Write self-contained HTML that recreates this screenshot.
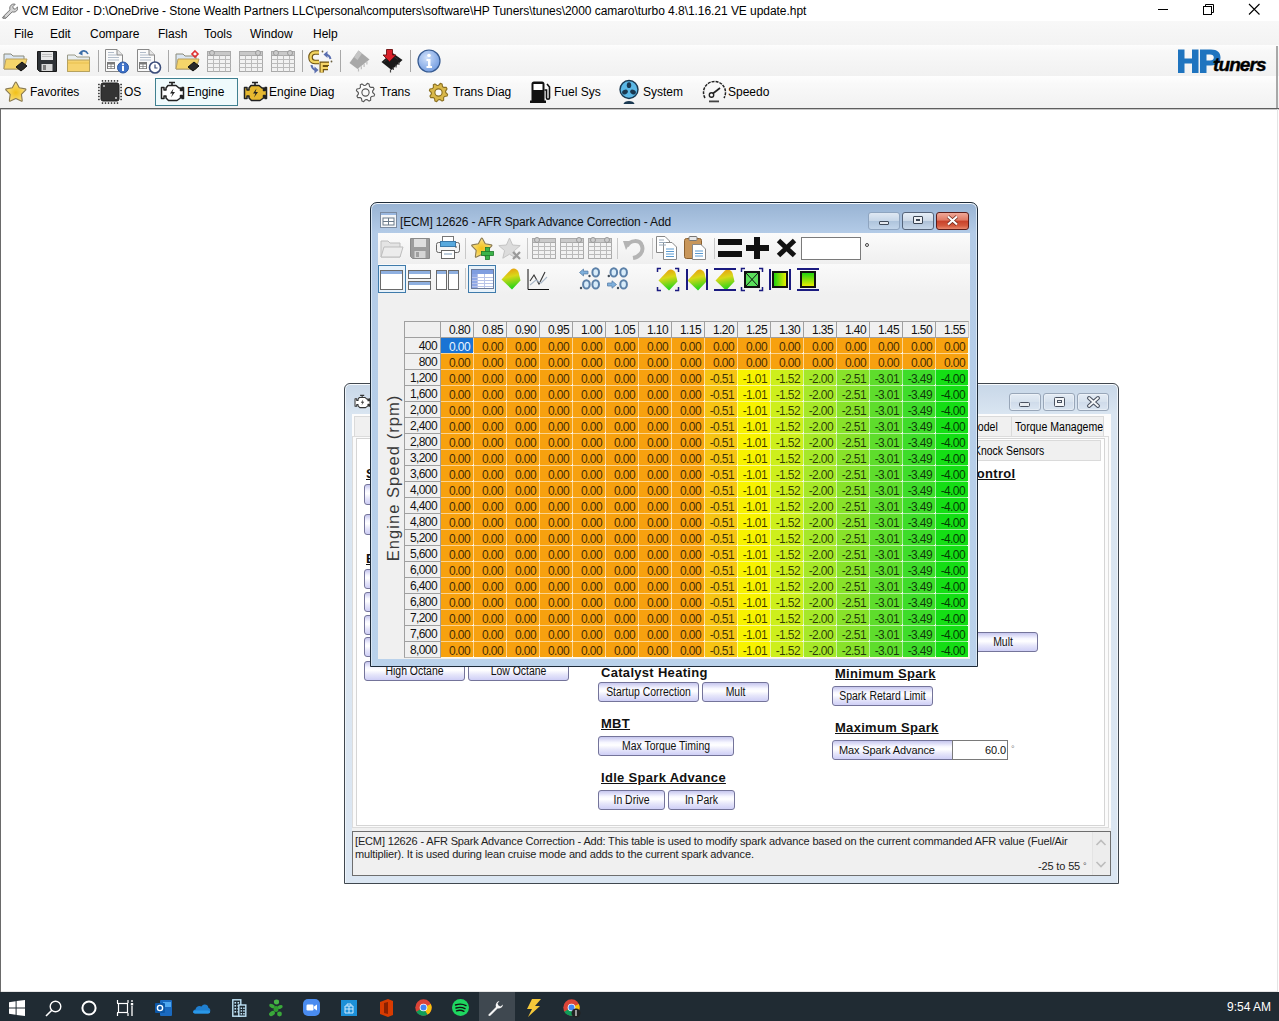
<!DOCTYPE html>
<html><head><meta charset="utf-8"><style>*{margin:0;padding:0;box-sizing:border-box}
html,body{width:1279px;height:1021px;overflow:hidden;background:#fff;font-family:"Liberation Sans",sans-serif;font-size:12px;color:#000;position:relative}
.abs{position:absolute}
.t{position:absolute;white-space:nowrap}
.c{font-size:12px;line-height:19px;text-align:right;padding-right:4px;color:#2a1a00;white-space:nowrap;letter-spacing:-0.6px}
.cell{width:32px;height:15px;font-size:12px;line-height:18px;text-align:right;padding-right:3px;color:rgba(0,0,0,0.76);white-space:nowrap;letter-spacing:-0.6px}
.h{background:#f0f0f0;border:1px solid #a0a0a0;color:#111}
</style></head><body>
<div class="abs" style="left:0;top:0;width:1279px;height:21px;background:#fff"></div>
<svg class="abs" style="left:1px;top:2px" width="17" height="17" viewBox="0 0 17 17">
<path d="M2.2 14.6 L9 7.8 C8.2 5.6 9.2 3 11.6 2.2 C12.6 1.9 13.4 2 14.2 2.3 L11.8 4.7 L12.4 6.6 L14.3 7.2 L16.6 4.8 C16.9 5.6 16.9 6.6 16.5 7.5 C15.6 9.6 13.3 10.6 11.2 9.9 L4.4 16.7 C3.8 17.3 2.8 17.2 2.2 16.6 L1.8 16.2 C1.2 15.8 1.6 15.2 2.2 14.6Z" fill="#d4d4d4" stroke="#6a6a6a" stroke-width="0.9"/>
<ellipse cx="3.2" cy="15.4" rx="1" ry="0.8" fill="none" stroke="#6a6a6a" stroke-width="0.7"/></svg>
<div class="t" style="left:22px;top:4px;font-size:12px;line-height:15px;color:#000;letter-spacing:-0.05px">VCM Editor - D:\OneDrive - Stone Wealth Partners LLC\personal\computers\software\HP Tuners\tunes\2000 camaro\turbo 4.8\1.16.21 VE update.hpt</div>
<div class="abs" style="left:1158px;top:9px;width:10px;height:1px;background:#000"></div>
<svg class="abs" style="left:1202px;top:3px" width="13" height="13" viewBox="0 0 13 13"><rect x="1.5" y="3.5" width="8" height="8" fill="none" stroke="#000" stroke-width="1"/><path d="M3.5 3.5 V1.5 H11.5 V9.5 H9.5" fill="none" stroke="#000" stroke-width="1"/></svg>
<svg class="abs" style="left:1248px;top:3px" width="13" height="13" viewBox="0 0 13 13"><path d="M1 1 L11.5 11.5 M11.5 1 L1 11.5" stroke="#000" stroke-width="1.1"/></svg>
<div class="abs" style="left:0;top:21px;width:1279px;height:24px;background:linear-gradient(#f8f8f8,#f3f3f3)"></div>
<div class="t" style="left:14px;top:27px;font-size:12px;line-height:15px">File</div>
<div class="t" style="left:50px;top:27px;font-size:12px;line-height:15px">Edit</div>
<div class="t" style="left:90px;top:27px;font-size:12px;line-height:15px">Compare</div>
<div class="t" style="left:158px;top:27px;font-size:12px;line-height:15px">Flash</div>
<div class="t" style="left:204px;top:27px;font-size:12px;line-height:15px">Tools</div>
<div class="t" style="left:250px;top:27px;font-size:12px;line-height:15px">Window</div>
<div class="t" style="left:313px;top:27px;font-size:12px;line-height:15px">Help</div>
<div class="abs" style="left:0;top:45px;width:1279px;height:31px;background:linear-gradient(#fdfdfd,#f8f8f8 20%,#f1f1f1)"></div>
<div class="abs" style="left:0;top:76px;width:1279px;height:32px;background:linear-gradient(#fefefe,#f9f9f9 25%,#f1f1f1)"></div>
<div class="abs" style="left:1276px;top:46px;width:2px;height:62px;background:#a8a8a8"></div>
<div class="abs" style="left:0;top:108px;width:1279px;height:1px;background:#5e5e5e"></div><div class="abs" style="left:0;top:109px;width:1279px;height:1px;background:#c8c8c8"></div>
<div class="abs" style="left:0;top:992px;width:1279px;height:29px;background:#202b33"></div>
<svg class="abs" style="left:3px;top:51px;overflow:visible" width="24" height="21" viewBox="0 0 24 21"><path d="M1 3 H8 L10 5 H21 V18 H1Z" fill="#dbe6f2" stroke="#8a8a7a" stroke-width="1"/>
<path d="M1 18 L3 8 H24 L21 18Z" fill="#f4d46a" stroke="#b9a060" stroke-width="1"/>
<path d="M13 16 L19 11 L24 15 L18 20Z" fill="#2a2a2a" stroke="#111" stroke-width="1"/></svg>
<svg class="abs" style="left:37px;top:51px;overflow:visible" width="20" height="21" viewBox="0 0 20 21"><path d="M0.5 0.5 H19.5 V20.5 H2.5 L0.5 18.5Z" fill="#2e3236" stroke="#1a1a1a"/>
<rect x="4" y="1" width="12" height="8" fill="#e8e8e8"/>
<rect x="5" y="3" width="10" height="1" fill="#c0c0c0"/><rect x="5" y="5" width="10" height="1" fill="#c0c0c0"/>
<rect x="4.5" y="13" width="11" height="7" fill="#d8d8d8"/><rect x="6" y="14" width="3" height="5" fill="#7a7a7a"/></svg>
<svg class="abs" style="left:67px;top:49px;overflow:visible" width="23" height="23" viewBox="0 0 23 23"><path d="M0.5 6 H8 L10 8 H22.5 V22.5 H0.5Z" fill="#e9eef0" stroke="#9a9a88"/>
<path d="M0.5 11 H22.5 V22.5 H0.5Z" fill="#f6d36e" stroke="#b7a25e"/>
<path d="M1 14 H22" stroke="#e8bf4c"/>
<path d="M13 4 C15 1 19 1 21 5" fill="none" stroke="#3d6fa8" stroke-width="1.6"/>
<path d="M11.5 4.5 L15.5 1.5 L15.5 6.5Z" fill="#3d6fa8"/></svg>
<div class="abs" style="left:98px;top:50px;width:1px;height:22px;background:#a8a8a8"></div>
<svg class="abs" style="left:105px;top:49px;overflow:visible" width="24" height="24" viewBox="0 0 24 24"><path d="M0.5 0.5 H12 L17.5 6 V22.5 H0.5Z" fill="#fafafa" stroke="#888"/>
<path d="M12 0.5 V6 H17.5" fill="#e6e6e6" stroke="#888"/>
<path d="M3 3.5 H9 M3 6 H12 M3 8.5 H14 M3 11 H14" stroke="#a8b4c4" stroke-width="0.9"/>
<rect x="2" y="13" width="8" height="7" fill="#7a7a7a"/><rect x="3" y="15.5" width="2.6" height="1.6" fill="#fff"/><rect x="6.4" y="15.5" width="2.6" height="1.6" fill="#fff"/><rect x="3" y="17.8" width="2.6" height="1.4" fill="#fff"/><rect x="6.4" y="17.8" width="2.6" height="1.4" fill="#fff"/><circle cx="18" cy="18.5" r="5.5" fill="#3f72c8" stroke="#2d58a0"/><rect x="17" y="17" width="2" height="5" fill="#fff"/><circle cx="18" cy="15.3" r="1.1" fill="#fff"/></svg>
<svg class="abs" style="left:137px;top:49px;overflow:visible" width="24" height="24" viewBox="0 0 24 24"><path d="M0.5 0.5 H12 L17.5 6 V22.5 H0.5Z" fill="#fafafa" stroke="#888"/>
<path d="M12 0.5 V6 H17.5" fill="#e6e6e6" stroke="#888"/>
<path d="M3 3.5 H9 M3 6 H12 M3 8.5 H14 M3 11 H14" stroke="#a8b4c4" stroke-width="0.9"/>
<rect x="2" y="13" width="8" height="7" fill="#7a7a7a"/><rect x="3" y="15.5" width="2.6" height="1.6" fill="#fff"/><rect x="6.4" y="15.5" width="2.6" height="1.6" fill="#fff"/><rect x="3" y="17.8" width="2.6" height="1.4" fill="#fff"/><rect x="6.4" y="17.8" width="2.6" height="1.4" fill="#fff"/><circle cx="18" cy="18.5" r="5.5" fill="#fff" stroke="#3a4c7a" stroke-width="1.6"/><path d="M18 15.5 V19 H20.5" stroke="#3a4c7a" stroke-width="1.2" fill="none"/></svg>
<div class="abs" style="left:168px;top:50px;width:1px;height:22px;background:#a8a8a8"></div>
<svg class="abs" style="left:175px;top:51px;overflow:visible" width="24" height="21" viewBox="0 0 24 21"><path d="M1 3 H8 L10 5 H21 V18 H1Z" fill="#dbe6f2" stroke="#8a8a7a" stroke-width="1"/>
<path d="M1 18 L3 8 H24 L21 18Z" fill="#f4d46a" stroke="#b9a060" stroke-width="1"/>
<path d="M13 16 L19 11 L24 15 L18 20Z" fill="#2a2a2a" stroke="#111" stroke-width="1"/><path d="M20 0 L23 3 L20 6 L17 3Z" fill="none" stroke="#e03030" stroke-width="1.6"/></svg>
<svg class="abs" style="left:207px;top:50px;overflow:visible" width="24" height="23" viewBox="0 0 24 23"><rect x="0.5" y="1.5" width="23" height="20" fill="#f2f2f2" stroke="#aaa"/><rect x="0.5" y="1.5" width="23" height="4" fill="#c9c9c9" stroke="#aaa"/><path d="M6.5 5.5 V21.5" stroke="#bbb"/><path d="M12.5 5.5 V21.5" stroke="#bbb"/><path d="M18.5 5.5 V21.5" stroke="#bbb"/><path d="M0.5 9.5 H23.5" stroke="#bbb"/><path d="M0.5 13.5 H23.5" stroke="#bbb"/><path d="M0.5 17.5 H23.5" stroke="#bbb"/><circle cx="5" cy="3" r="2.5" fill="#ccc" stroke="#999"/></svg>
<svg class="abs" style="left:239px;top:50px;overflow:visible" width="24" height="23" viewBox="0 0 24 23"><rect x="0.5" y="1.5" width="23" height="20" fill="#f2f2f2" stroke="#aaa"/><rect x="0.5" y="1.5" width="23" height="4" fill="#c9c9c9" stroke="#aaa"/><path d="M6.5 5.5 V21.5" stroke="#bbb"/><path d="M12.5 5.5 V21.5" stroke="#bbb"/><path d="M18.5 5.5 V21.5" stroke="#bbb"/><path d="M0.5 9.5 H23.5" stroke="#bbb"/><path d="M0.5 13.5 H23.5" stroke="#bbb"/><path d="M0.5 17.5 H23.5" stroke="#bbb"/><circle cx="19" cy="3" r="2.5" fill="#ccc" stroke="#999"/></svg>
<svg class="abs" style="left:271px;top:50px;overflow:visible" width="24" height="23" viewBox="0 0 24 23"><rect x="0.5" y="1.5" width="23" height="20" fill="#f2f2f2" stroke="#aaa"/><rect x="0.5" y="1.5" width="23" height="4" fill="#c9c9c9" stroke="#aaa"/><path d="M6.5 5.5 V21.5" stroke="#bbb"/><path d="M12.5 5.5 V21.5" stroke="#bbb"/><path d="M18.5 5.5 V21.5" stroke="#bbb"/><path d="M0.5 9.5 H23.5" stroke="#bbb"/><path d="M0.5 13.5 H23.5" stroke="#bbb"/><path d="M0.5 17.5 H23.5" stroke="#bbb"/><circle cx="5" cy="3" r="2.5" fill="#ccc" stroke="#999"/><circle cx="19" cy="3" r="2.5" fill="#ccc" stroke="#999"/></svg>
<div class="abs" style="left:302px;top:50px;width:1px;height:22px;background:#a8a8a8"></div>
<svg class="abs" style="left:305px;top:46px;overflow:visible" width="30" height="30" viewBox="0 0 30 30"><path d="M14 6.5 H10 C6.8 6.5 5.5 9 5.5 11.3 C5.5 13.6 6.8 16 10 16 H14" fill="none" stroke="#6e5210" stroke-width="4.6"/>
<path d="M14 6.5 H10 C6.8 6.5 5.5 9 5.5 11.3 C5.5 13.6 6.8 16 10 16 H14" fill="none" stroke="#f1d462" stroke-width="2.4"/>
<path d="M16.7 26.5 V17.8 H24 M16.7 22 H23" fill="none" stroke="#6e5210" stroke-width="4.4"/>
<path d="M16.7 26.5 V17.8 H24 M16.7 22 H23" fill="none" stroke="#f6d468" stroke-width="2.2"/>
<path d="M20.5 8.5 Q24.5 8.8 25.5 13" fill="none" stroke="#5a6fb0" stroke-width="2"/><path d="M18.5 8.5 L22.5 5 L22.5 12Z" fill="#5a6fb0"/>
<path d="M6.5 19 Q7 23 10.5 24" fill="none" stroke="#5a6fb0" stroke-width="2"/><path d="M13.5 24 L9.5 20.5 L9.5 27.5Z" fill="#5a6fb0"/>
<circle cx="17.5" cy="5.5" r="0.9" fill="#6a6040"/><circle cx="26.5" cy="15.5" r="0.9" fill="#6a6040"/></svg>
<div class="abs" style="left:340px;top:50px;width:1px;height:22px;background:#a8a8a8"></div>
<svg class="abs" style="left:348px;top:46px;overflow:visible" width="24" height="28" viewBox="0 0 24 28"><path d="M1.5 17 L10.5 4.5 L21.5 13.5 L9.5 23Z" fill="#a8a8a8"/><path d="M6 11 L10.5 4.5 L14 7.5 L9.5 14Z" fill="#c4c4c4"/><path d="M10.5 22.5 V25.5" stroke="#bcbcbc" stroke-width="1.2"/><path d="M13.3 20.2 V23.2" stroke="#bcbcbc" stroke-width="1.2"/><path d="M16.1 17.9 V20.9" stroke="#bcbcbc" stroke-width="1.2"/><path d="M18.9 15.600000000000001 V18.6" stroke="#bcbcbc" stroke-width="1.2"/></svg>
<svg class="abs" style="left:380px;top:46px;overflow:visible" width="24" height="28" viewBox="0 0 24 28"><path d="M1.5 16 L12 6.5 L22.5 14 L11.5 24Z" fill="#1a1a1a"/><path d="M4 16 L12 9 L18 13.5" fill="none" stroke="#3a3a3a" stroke-width="0.8"/><path d="M10.5 23.5 V26.5" stroke="#444" stroke-width="1.2"/><path d="M13.3 21.0 V24.0" stroke="#444" stroke-width="1.2"/><path d="M16.1 18.5 V21.5" stroke="#444" stroke-width="1.2"/><path d="M18.9 16.0 V19.0" stroke="#444" stroke-width="1.2"/><path d="M6.5 3.5 H12.5 V9 H16 L9.5 15.5 L3 9 H6.5Z" fill="#d8202a" stroke="#6a1010" stroke-width="0.9"/></svg>
<div class="abs" style="left:410px;top:50px;width:1px;height:22px;background:#a8a8a8"></div>
<svg class="abs" style="left:417px;top:49px;overflow:visible" width="24" height="24" viewBox="0 0 24 24"><defs><radialGradient id="ig" cx="0.4" cy="0.35" r="0.7"><stop offset="0" stop-color="#cfe0fa"/><stop offset="1" stop-color="#6f9ae0"/></radialGradient></defs>
<circle cx="12" cy="12" r="11" fill="url(#ig)" stroke="#35598f" stroke-width="1.2"/>
<circle cx="12" cy="6.5" r="1.8" fill="#fff"/><path d="M9.5 10 H13.5 V17 H15 V19 H9.5 V17 H11 V12 H9.5Z" fill="#fff"/></svg>
<svg class="abs" style="left:1178px;top:49px;overflow:visible" width="43" height="25" viewBox="0 0 43 25"><path d="M0 0.5 H6.5 V9.5 H14 V0.5 H20.5 V24 H14 V14.5 H6.5 V24 H0Z" fill="#1f74bf"/>
<path d="M22 0.5 H33 C39.5 0.5 42.5 3.5 42.5 8.5 C42.5 13.5 39 16.5 33 16.5 H28.5 V24 H22Z M28.5 5.5 V11.5 H32 C34.5 11.5 35.8 10.5 35.8 8.5 C35.8 6.5 34.5 5.5 32 5.5Z" fill="#1f74bf" fill-rule="evenodd"/></svg><div class="t" style="left:1213px;top:55px;font-family:'Liberation Sans';font-weight:bold;font-style:italic;font-size:19px;line-height:20px;color:#000;letter-spacing:-0.9px;-webkit-text-stroke:0.4px #000">tuners</div>
<svg class="abs" style="left:4px;top:80px;overflow:visible" width="24" height="24" viewBox="0 0 24 24"><defs><radialGradient id="sg" cx="0.5" cy="0.55" r="0.55"><stop offset="0" stop-color="#f2c018"/><stop offset="0.6" stop-color="#f6d45a"/><stop offset="1" stop-color="#f8e49a"/></radialGradient></defs>
<path d="M11.18 2.56 Q11.80 1.40 12.42 2.56 L15.27 7.83 L21.16 8.90 Q22.45 9.14 21.54 10.09 L17.41 14.42 L18.21 20.36 Q18.38 21.66 17.20 21.09 L11.80 18.50 L6.40 21.09 Q5.22 21.66 5.39 20.36 L6.19 14.42 L2.06 10.09 Q1.15 9.14 2.44 8.90 L8.33 7.83 Z" fill="url(#sg)" stroke="#8a7a50" stroke-width="1.1" stroke-linejoin="round"/></svg>
<div class="t" style="left:30px;top:85px;font-size:12px;line-height:15px">Favorites</div>
<svg class="abs" style="left:98px;top:80px;overflow:visible" width="24" height="24" viewBox="0 0 24 24"><rect x="3" y="3" width="18" height="18" rx="2" fill="#333" stroke="#222"/><rect x="3.8" y="0" width="1.4" height="1.8" fill="#444"/><rect x="3.8" y="22.2" width="1.4" height="1.8" fill="#444"/><rect x="0" y="3.8" width="1.8" height="1.4" fill="#444"/><rect x="22.2" y="3.8" width="1.8" height="1.4" fill="#444"/><rect x="6.8" y="0" width="1.4" height="1.8" fill="#444"/><rect x="6.8" y="22.2" width="1.4" height="1.8" fill="#444"/><rect x="0" y="6.8" width="1.8" height="1.4" fill="#444"/><rect x="22.2" y="6.8" width="1.8" height="1.4" fill="#444"/><rect x="9.8" y="0" width="1.4" height="1.8" fill="#444"/><rect x="9.8" y="22.2" width="1.4" height="1.8" fill="#444"/><rect x="0" y="9.8" width="1.8" height="1.4" fill="#444"/><rect x="22.2" y="9.8" width="1.8" height="1.4" fill="#444"/><rect x="12.8" y="0" width="1.4" height="1.8" fill="#444"/><rect x="12.8" y="22.2" width="1.4" height="1.8" fill="#444"/><rect x="0" y="12.8" width="1.8" height="1.4" fill="#444"/><rect x="22.2" y="12.8" width="1.8" height="1.4" fill="#444"/><rect x="15.8" y="0" width="1.4" height="1.8" fill="#444"/><rect x="15.8" y="22.2" width="1.4" height="1.8" fill="#444"/><rect x="0" y="15.8" width="1.8" height="1.4" fill="#444"/><rect x="22.2" y="15.8" width="1.8" height="1.4" fill="#444"/><rect x="18.8" y="0" width="1.4" height="1.8" fill="#444"/><rect x="18.8" y="22.2" width="1.4" height="1.8" fill="#444"/><rect x="0" y="18.8" width="1.8" height="1.4" fill="#444"/><rect x="22.2" y="18.8" width="1.8" height="1.4" fill="#444"/><circle cx="6" cy="6" r="0.9" fill="#ddd"/><circle cx="18" cy="18" r="0.9" fill="#ddd"/></svg>
<div class="t" style="left:124px;top:85px;font-size:12px;line-height:15px">OS</div>
<div class="abs" style="left:155px;top:78px;width:83px;height:28px;border:1px solid #3f8090;background:#effafc"></div>
<svg class="abs" style="left:160px;top:81px;overflow:visible" width="25" height="21" viewBox="0 0 25 21"><path d="M9 1.5 H15 M12 1.5 V4.5" stroke="#222" stroke-width="1.6"/>
<path d="M6 7 L8 4.5 H16 L19 7 H20.5 V9.5 H22 V6.5 H23.5 V17.5 H22 V14.5 H20.5 V17 L17 19.5 H8.5 L6 17 V15 H4 V17.5 H1.5 V6.5 H4 V9 H6Z" fill="#fff" stroke="#222" stroke-width="1.5" stroke-linejoin="round"/>
<path d="M13.5 7.5 L10 12.5 H12.5 L11 16.5 L15 11 H12.5Z" fill="#222"/></svg>
<div class="t" style="left:187px;top:85px;font-size:12px;line-height:15px">Engine</div>
<svg class="abs" style="left:243px;top:81px;overflow:visible" width="25" height="21" viewBox="0 0 25 21"><path d="M9 1.5 H15 M12 1.5 V4.5" stroke="#222" stroke-width="1.6"/>
<path d="M6 7 L8 4.5 H16 L19 7 H20.5 V9.5 H22 V6.5 H23.5 V17.5 H22 V14.5 H20.5 V17 L17 19.5 H8.5 L6 17 V15 H4 V17.5 H1.5 V6.5 H4 V9 H6Z" fill="#e6b830" stroke="#222" stroke-width="1.5" stroke-linejoin="round"/>
<path d="M13.5 7.5 L10 12.5 H12.5 L11 16.5 L15 11 H12.5Z" fill="#222"/></svg>
<div class="t" style="left:269px;top:85px;font-size:12px;line-height:15px">Engine Diag</div>
<svg class="abs" style="left:356px;top:83px;overflow:visible" width="19" height="19" viewBox="0 0 19 19"><path d="M16.70,9.50 L18.62,11.31 L18.09,13.06 L15.49,13.50 L14.59,14.59 L14.67,17.23 L13.06,18.09 L10.90,16.56 L9.50,16.70 L7.69,18.62 L5.94,18.09 L5.50,15.49 L4.41,14.59 L1.77,14.67 L0.91,13.06 L2.44,10.90 L2.30,9.50 L0.38,7.69 L0.91,5.94 L3.51,5.50 L4.41,4.41 L4.33,1.77 L5.94,0.91 L8.10,2.44 L9.50,2.30 L11.31,0.38 L13.06,0.91 L13.50,3.51 L14.59,4.41 L17.23,4.33 L18.09,5.94 L16.56,8.10Z" fill="#fafafa" stroke="#555" stroke-width="1.1" stroke-linejoin="round"/><circle cx="9.5" cy="9.5" r="3.6" fill="#fafafa" stroke="#555" stroke-width="1.1"/></svg>
<div class="t" style="left:380px;top:85px;font-size:12px;line-height:15px">Trans</div>
<svg class="abs" style="left:429px;top:83px;overflow:visible" width="19" height="19" viewBox="0 0 19 19"><path d="M16.70,9.50 L18.62,11.31 L18.09,13.06 L15.49,13.50 L14.59,14.59 L14.67,17.23 L13.06,18.09 L10.90,16.56 L9.50,16.70 L7.69,18.62 L5.94,18.09 L5.50,15.49 L4.41,14.59 L1.77,14.67 L0.91,13.06 L2.44,10.90 L2.30,9.50 L0.38,7.69 L0.91,5.94 L3.51,5.50 L4.41,4.41 L4.33,1.77 L5.94,0.91 L8.10,2.44 L9.50,2.30 L11.31,0.38 L13.06,0.91 L13.50,3.51 L14.59,4.41 L17.23,4.33 L18.09,5.94 L16.56,8.10Z" fill="#d9b84a" stroke="#8a6f20" stroke-width="1.1" stroke-linejoin="round"/><circle cx="9.5" cy="9.5" r="3.6" fill="#fafafa" stroke="#8a6f20" stroke-width="1.1"/></svg>
<div class="t" style="left:453px;top:85px;font-size:12px;line-height:15px">Trans Diag</div>
<svg class="abs" style="left:530px;top:81px;overflow:visible" width="21" height="22" viewBox="0 0 21 22"><path d="M1.5 3 C1.5 1.5 2.5 0.5 4 0.5 H12 C13.5 0.5 14.5 1.5 14.5 3 V19.5 H16 V22 H0 V19.5 H1.5Z" fill="#111"/>
<rect x="3.5" y="3" width="9" height="6" fill="#fff"/>
<path d="M14.5 9 H16.5 V17 C16.5 18.5 19.5 18.5 19.5 17 V6 L17 3" fill="none" stroke="#111" stroke-width="1.6"/></svg>
<div class="t" style="left:554px;top:85px;font-size:12px;line-height:15px">Fuel Sys</div>
<svg class="abs" style="left:619px;top:80px;overflow:visible" width="20" height="24" viewBox="0 0 20 24"><circle cx="10" cy="9.5" r="9" fill="#5cb8e6" stroke="#1a3850" stroke-width="1.4"/>
<ellipse cx="10" cy="5.2" rx="2.2" ry="3" fill="#1a3850"/><ellipse cx="6" cy="12" rx="3" ry="2.2" transform="rotate(-30 6 12)" fill="#1a3850"/><ellipse cx="14" cy="12" rx="3" ry="2.2" transform="rotate(30 14 12)" fill="#1a3850"/>
<circle cx="10" cy="9.5" r="1.4" fill="#5cb8e6"/>
<path d="M4.5 24 C5 20 15 20 15.5 24Z" fill="#1a3850"/></svg>
<div class="t" style="left:643px;top:85px;font-size:12px;line-height:15px">System</div>
<svg class="abs" style="left:702px;top:81px;overflow:visible" width="25" height="22" viewBox="0 0 25 22"><path d="M3 17 A11 11 0 1 1 22 17" fill="none" stroke="#222" stroke-width="1.5" stroke-dasharray="3 1"/>
<path d="M9 14 L18 7" stroke="#222" stroke-width="1.6"/><circle cx="9.5" cy="14" r="2.2" fill="#fff" stroke="#222" stroke-width="1.4"/>
<rect x="7" y="19.5" width="10" height="1.8" fill="#444"/></svg>
<div class="t" style="left:728px;top:85px;font-size:12px;line-height:15px">Speedo</div>
<div class="abs" style="left:344px;top:383px;width:775px;height:501px;border:1px solid #40474f;border-radius:6px 6px 0 0;background:linear-gradient(#c8d7e8,#d9e5f1 30px,#dbe6f2);box-shadow:inset 0 1px 0 #f8fbfe,inset 1px 0 0 #eef4fa,inset -1px 0 0 #eef4fa"></div>
<svg class="abs" style="left:354px;top:394px;overflow:visible" width="17" height="15" viewBox="0 0 25 21"><path d="M9 1.5 H15 M12 1.5 V4.5" stroke="#333" stroke-width="1.6"/>
<path d="M6 7 L8 4.5 H16 L19 7 H20.5 V9.5 H22 V6.5 H23.5 V17.5 H22 V14.5 H20.5 V17 L17 19.5 H8.5 L6 17 V15 H4 V17.5 H1.5 V6.5 H4 V9 H6Z" fill="#fff" stroke="#333" stroke-width="1.5" stroke-linejoin="round"/>
<path d="M13.5 7.5 L10 12.5 H12.5 L11 16.5 L15 11 H12.5Z" fill="#333"/></svg>
<div class="abs" style="left:1009px;top:393px;width:32px;height:18px;border:1px solid #98a6b8;border-radius:3px;background:linear-gradient(#e4ecf5,#d6e1ed 50%,#cfdbea 51%,#dae5f1);box-shadow:inset 0 0 0 1px rgba(255,255,255,0.35)"></div>
<div class="abs" style="left:1043px;top:393px;width:32px;height:18px;border:1px solid #98a6b8;border-radius:3px;background:linear-gradient(#e4ecf5,#d6e1ed 50%,#cfdbea 51%,#dae5f1);box-shadow:inset 0 0 0 1px rgba(255,255,255,0.35)"></div>
<div class="abs" style="left:1077px;top:393px;width:32px;height:18px;border:1px solid #98a6b8;border-radius:3px;background:linear-gradient(#e4ecf5,#d6e1ed 50%,#cfdbea 51%,#dae5f1);box-shadow:inset 0 0 0 1px rgba(255,255,255,0.35)"></div>
<div class="abs" style="left:1019px;top:402px;width:11px;height:5px;border:1.5px solid #4a5260;background:#e8ecf0;border-radius:1.5px"></div>
<div class="abs" style="left:1054px;top:397px;width:11px;height:10px;border:1.5px solid #4a5260;background:#f4f6f8;border-radius:1.5px"></div>
<div class="abs" style="left:1057px;top:400px;width:5px;height:3px;border:1px solid #4a5260;background:#e8ecf0"></div>
<svg class="abs" style="left:1087px;top:396px;overflow:visible" width="13" height="12" viewBox="0 0 13 12"><path d="M2 2 L11 10 M11 2 L2 10" stroke="#4a5260" stroke-width="4" stroke-linecap="round"/><path d="M2 2 L11 10 M11 2 L2 10" stroke="#f6f8fa" stroke-width="1.8" stroke-linecap="round"/></svg>
<div class="abs" style="left:352px;top:414px;width:759px;height:462px;background:#f0f0f0"></div>
<div class="abs" style="left:352px;top:414px;width:759px;height:414px;background:#fcfcfc"></div>
<div class="abs" style="left:354px;top:416px;width:750px;height:20px;background:#f0f0f0;border:1px solid #dadada;border-bottom:none"></div>
<div class="abs" style="left:1011px;top:416px;width:1px;height:20px;background:#dadada"></div>
<div class="t" style="left:969px;top:420px;font-size:12px;line-height:14px;transform:scaleX(0.88);transform-origin:left top">Model</div>
<div class="t" style="left:1015px;top:420px;width:100px;overflow:hidden;font-size:12px;line-height:14px;transform:scaleX(0.88);transform-origin:left top">Torque Manageme</div>
<div class="abs" style="left:1104px;top:416px;width:7px;height:20px;background:#fcfcfc"></div>
<div class="abs" style="left:352px;top:436px;width:757px;height:392px;border:1px solid #dcdcdc;background:#fbfbfb"></div>
<div class="abs" style="left:356px;top:438px;width:749px;height:388px;border:1px solid #d5d5d5;background:#fff"></div>
<div class="abs" style="left:520px;top:440px;width:581px;height:21px;background:#f0f0f0;border:1px solid #dadada"></div>
<div class="t" style="left:974px;top:444px;font-size:12px;line-height:14px;transform:scaleX(0.87);transform-origin:left top">Knock Sensors</div>
<div class="t" style="left:366px;top:467px;font-size:12px;line-height:14px;font-weight:bold;letter-spacing:0.3px;transform:scaleX(1.08);transform-origin:left top;text-decoration:underline;text-underline-offset:1px;color:#111">Spark Control</div>
<div class="abs" style="left:364px;top:484px;width:100px;height:21px;border:1px solid #74749a;border-radius:3px;background:linear-gradient(#c6c6ee 0%,#f6f6ff 30%,#ffffff 45%,#e6e6fa 70%,#cfcff6 100%);"></div><div class="t" style="left:364px;top:484px;width:100px;height:21px;line-height:22px;text-align:center;font-size:12px;color:#111;transform:scaleX(0.87)">Base</div>
<div class="abs" style="left:364px;top:514px;width:100px;height:21px;border:1px solid #74749a;border-radius:3px;background:linear-gradient(#c6c6ee 0%,#f6f6ff 30%,#ffffff 45%,#e6e6fa 70%,#cfcff6 100%);"></div><div class="t" style="left:364px;top:514px;width:100px;height:21px;line-height:22px;text-align:center;font-size:12px;color:#111;transform:scaleX(0.87)">Base</div>
<div class="t" style="left:366px;top:552px;font-size:12px;line-height:14px;font-weight:bold;letter-spacing:0.3px;transform:scaleX(1.08);transform-origin:left top;text-decoration:underline;text-underline-offset:1px;color:#111">Burst Knock</div>
<div class="abs" style="left:364px;top:569px;width:100px;height:20px;border:1px solid #74749a;border-radius:3px;background:linear-gradient(#c6c6ee 0%,#f6f6ff 30%,#ffffff 45%,#e6e6fa 70%,#cfcff6 100%);"></div><div class="t" style="left:364px;top:569px;width:100px;height:20px;line-height:21px;text-align:center;font-size:12px;color:#111;transform:scaleX(0.87)">Table</div>
<div class="abs" style="left:364px;top:592px;width:100px;height:20px;border:1px solid #74749a;border-radius:3px;background:linear-gradient(#c6c6ee 0%,#f6f6ff 30%,#ffffff 45%,#e6e6fa 70%,#cfcff6 100%);"></div><div class="t" style="left:364px;top:592px;width:100px;height:20px;line-height:21px;text-align:center;font-size:12px;color:#111;transform:scaleX(0.87)">Table</div>
<div class="abs" style="left:364px;top:615px;width:100px;height:20px;border:1px solid #74749a;border-radius:3px;background:linear-gradient(#c6c6ee 0%,#f6f6ff 30%,#ffffff 45%,#e6e6fa 70%,#cfcff6 100%);"></div><div class="t" style="left:364px;top:615px;width:100px;height:20px;line-height:21px;text-align:center;font-size:12px;color:#111;transform:scaleX(0.87)">Table</div>
<div class="abs" style="left:364px;top:637px;width:100px;height:20px;border:1px solid #74749a;border-radius:3px;background:linear-gradient(#c6c6ee 0%,#f6f6ff 30%,#ffffff 45%,#e6e6fa 70%,#cfcff6 100%);"></div><div class="t" style="left:364px;top:637px;width:100px;height:20px;line-height:21px;text-align:center;font-size:12px;color:#111;transform:scaleX(0.87)">Table</div>
<div class="abs" style="left:364px;top:661px;width:101px;height:20px;border:1px solid #74749a;border-radius:3px;background:linear-gradient(#c6c6ee 0%,#f6f6ff 30%,#ffffff 45%,#e6e6fa 70%,#cfcff6 100%);"></div><div class="t" style="left:364px;top:661px;width:101px;height:20px;line-height:21px;text-align:center;font-size:12px;color:#111;transform:scaleX(0.87)">High Octane</div>
<div class="abs" style="left:468px;top:661px;width:101px;height:20px;border:1px solid #74749a;border-radius:3px;background:linear-gradient(#c6c6ee 0%,#f6f6ff 30%,#ffffff 45%,#e6e6fa 70%,#cfcff6 100%);"></div><div class="t" style="left:468px;top:661px;width:101px;height:20px;line-height:21px;text-align:center;font-size:12px;color:#111;transform:scaleX(0.87)">Low Octane</div>
<div class="t" style="left:601px;top:666px;font-size:12px;line-height:14px;font-weight:bold;letter-spacing:0.3px;transform:scaleX(1.08);transform-origin:left top;color:#111">Catalyst Heating</div>
<div class="abs" style="left:598px;top:682px;width:101px;height:20px;border:1px solid #74749a;border-radius:3px;background:linear-gradient(#c6c6ee 0%,#f6f6ff 30%,#ffffff 45%,#e6e6fa 70%,#cfcff6 100%);"></div><div class="t" style="left:598px;top:682px;width:101px;height:20px;line-height:21px;text-align:center;font-size:12px;color:#111;transform:scaleX(0.87)">Startup Correction</div>
<div class="abs" style="left:702px;top:682px;width:67px;height:20px;border:1px solid #74749a;border-radius:3px;background:linear-gradient(#c6c6ee 0%,#f6f6ff 30%,#ffffff 45%,#e6e6fa 70%,#cfcff6 100%);"></div><div class="t" style="left:702px;top:682px;width:67px;height:20px;line-height:21px;text-align:center;font-size:12px;color:#111;transform:scaleX(0.87)">Mult</div>
<div class="t" style="left:601px;top:717px;font-size:12px;line-height:14px;font-weight:bold;letter-spacing:0.3px;transform:scaleX(1.08);transform-origin:left top;text-decoration:underline;text-underline-offset:1px;color:#111">MBT</div>
<div class="abs" style="left:598px;top:736px;width:136px;height:20px;border:1px solid #74749a;border-radius:3px;background:linear-gradient(#c6c6ee 0%,#f6f6ff 30%,#ffffff 45%,#e6e6fa 70%,#cfcff6 100%);"></div><div class="t" style="left:598px;top:736px;width:136px;height:20px;line-height:21px;text-align:center;font-size:12px;color:#111;transform:scaleX(0.87)">Max Torque Timing</div>
<div class="t" style="left:601px;top:771px;font-size:12px;line-height:14px;font-weight:bold;letter-spacing:0.3px;transform:scaleX(1.08);transform-origin:left top;text-decoration:underline;text-underline-offset:1px;color:#111">Idle Spark Advance</div>
<div class="abs" style="left:598px;top:790px;width:67px;height:20px;border:1px solid #74749a;border-radius:3px;background:linear-gradient(#c6c6ee 0%,#f6f6ff 30%,#ffffff 45%,#e6e6fa 70%,#cfcff6 100%);"></div><div class="t" style="left:598px;top:790px;width:67px;height:20px;line-height:21px;text-align:center;font-size:12px;color:#111;transform:scaleX(0.87)">In Drive</div>
<div class="abs" style="left:668px;top:790px;width:67px;height:20px;border:1px solid #74749a;border-radius:3px;background:linear-gradient(#c6c6ee 0%,#f6f6ff 30%,#ffffff 45%,#e6e6fa 70%,#cfcff6 100%);"></div><div class="t" style="left:668px;top:790px;width:67px;height:20px;line-height:21px;text-align:center;font-size:12px;color:#111;transform:scaleX(0.87)">In Park</div>
<div class="t" style="left:922px;top:467px;font-size:12px;line-height:14px;font-weight:bold;letter-spacing:0.3px;transform:scaleX(1.08);transform-origin:left top;text-decoration:underline;text-underline-offset:1px;color:#111">Knock Control</div>
<div class="abs" style="left:968px;top:632px;width:70px;height:20px;border:1px solid #74749a;border-radius:3px;background:linear-gradient(#c6c6ee 0%,#f6f6ff 30%,#ffffff 45%,#e6e6fa 70%,#cfcff6 100%);"></div><div class="t" style="left:968px;top:632px;width:70px;height:20px;line-height:21px;text-align:center;font-size:12px;color:#111;transform:scaleX(0.87)">Mult</div>
<div class="t" style="left:835px;top:667px;font-size:12px;line-height:14px;font-weight:bold;letter-spacing:0.3px;transform:scaleX(1.08);transform-origin:left top;text-decoration:underline;text-underline-offset:1px;color:#111">Minimum Spark</div>
<div class="abs" style="left:832px;top:686px;width:101px;height:20px;border:1px solid #74749a;border-radius:3px;background:linear-gradient(#c6c6ee 0%,#f6f6ff 30%,#ffffff 45%,#e6e6fa 70%,#cfcff6 100%);"></div><div class="t" style="left:832px;top:686px;width:101px;height:20px;line-height:21px;text-align:center;font-size:12px;color:#111;transform:scaleX(0.87)">Spark Retard Limit</div>
<div class="t" style="left:835px;top:721px;font-size:12px;line-height:14px;font-weight:bold;letter-spacing:0.3px;transform:scaleX(1.08);transform-origin:left top;text-decoration:underline;text-underline-offset:1px;color:#111">Maximum Spark</div>
<div class="abs" style="left:832px;top:740px;width:121px;height:20px;border:1px solid #74749a;border-radius:3px 0 0 3px;background:linear-gradient(#c6c6ee 0%,#f6f6ff 30%,#ffffff 45%,#e6e6fa 70%,#cfcff6 100%)"></div>
<div class="t" style="left:839px;top:743px;font-size:11px;line-height:14px;letter-spacing:-0.12px;color:#111">Max Spark Advance</div>
<div class="abs" style="left:952px;top:740px;width:56px;height:20px;border:1px solid #7a7a7a;background:#fff"></div>
<div class="t" style="left:952px;top:743px;width:54px;text-align:right;font-size:11px;line-height:14px;letter-spacing:-0.1px;color:#111">60.0</div>
<div class="t" style="left:1011px;top:744px;font-size:9px;line-height:10px;color:#888">°</div>
<div class="abs" style="left:352px;top:831px;width:759px;height:45px;border:1px solid #6e6e6e;background:#f0f0f0"></div>
<div class="abs" style="left:1092px;top:832px;width:18px;height:43px;background:#ededed;border-left:1px solid #e4e4e4"></div>
<svg class="abs" style="left:1095px;top:838px;overflow:visible" width="12" height="8" viewBox="0 0 12 8"><path d="M1.5 7 L6 2.5 L10.5 7" fill="none" stroke="#bdbdbd" stroke-width="1.6"/></svg>
<svg class="abs" style="left:1095px;top:861px;overflow:visible" width="12" height="8" viewBox="0 0 12 8"><path d="M1.5 1 L6 5.5 L10.5 1" fill="none" stroke="#bdbdbd" stroke-width="1.6"/></svg>
<div class="t" style="left:355px;top:835px;font-size:11px;line-height:13px;color:#222;letter-spacing:-0.155px">[ECM] 12626 - AFR Spark Advance Correction - Add: This table is used to modify spark advance based on the current commanded AFR value (Fuel/Air<br>multiplier). It is used during lean cruise mode and adds to the current spark advance.</div>
<div class="t" style="left:1038px;top:860px;font-size:11px;line-height:13px;color:#222;letter-spacing:-0.15px">-25 to 55 <span style="font-size:9px;color:#555;vertical-align:1px">°</span></div>
<div class="abs" style="left:370px;top:202px;width:608px;height:465px;border:1px solid #1d2a38;border-radius:7px 7px 0 0;background:linear-gradient(#98b3d3,#b3cbe7 30px,#bad2eb);box-shadow:inset 0 1px 0 #f4f8fc,inset 1px 0 0 #d8e6f4,inset -1px 0 0 #d8e6f4"></div>
<svg class="abs" style="left:380px;top:212px;overflow:visible" width="17" height="16" viewBox="0 0 17 16"><rect x="0.5" y="0.5" width="16" height="15" fill="#f4f6f8" stroke="#7a8aa0"/><rect x="1" y="1" width="15" height="2" fill="#9ab8e0"/><rect x="3" y="6" width="11" height="7" fill="#fff" stroke="#6a7a8a"/><path d="M3 9.5 H14 M8.5 6 V13" stroke="#6a7a8a"/></svg>
<div class="t" style="left:400px;top:215px;font-size:12px;line-height:15px;color:#111;letter-spacing:-0.15px">[ECM] 12626 - AFR Spark Advance Correction - Add</div>
<div class="abs" style="left:868px;top:212px;width:32px;height:18px;border:1px solid #8ea4bf;border-radius:3px;background:linear-gradient(#dfe8f3,#c6d6e8 50%,#aec4dc 51%,#c2d5ea)"></div>
<div class="abs" style="left:879px;top:221px;width:10px;height:4px;border:1px solid #404a58;background:#e4e8ee;border-radius:1px"></div>
<div class="abs" style="left:902px;top:212px;width:32px;height:18px;border:1px solid #55647a;border-radius:3px;background:linear-gradient(#e6eef7,#cdd9e7 50%,#adc0d6 51%,#c7d7e9)"></div>
<div class="abs" style="left:913px;top:216px;width:10px;height:8px;border:1px solid #3a4452;background:#eef1f5;border-radius:1px"></div>
<div class="abs" style="left:916px;top:219px;width:4px;height:2px;background:#3a4452"></div>
<div class="abs" style="left:936px;top:212px;width:33px;height:18px;border:1px solid #5a1d1a;border-radius:3px;background:linear-gradient(#f0a898,#e07a64 45%,#c8412a 50%,#d45a3e 80%,#e88a70)"></div>
<svg class="abs" style="left:946px;top:215px;overflow:visible" width="13" height="11" viewBox="0 0 13 11"><path d="M2 1.5 L11 9.5 M11 1.5 L2 9.5" stroke="#6a2418" stroke-width="3.6"/><path d="M2 1.5 L11 9.5 M11 1.5 L2 9.5" stroke="#fff" stroke-width="2.2"/></svg>
<div class="abs" style="left:378px;top:233px;width:592px;height:426px;background:#f0f0f0"></div>
<div class="abs" style="left:378px;top:233px;width:592px;height:31px;background:linear-gradient(#fbfbfb,#efefef)"></div>
<div class="abs" style="left:378px;top:264px;width:592px;height:31px;background:linear-gradient(#fafafa,#f0f0f0)"></div>
<svg class="abs" style="left:380px;top:237px;overflow:visible" width="24" height="22" viewBox="0 0 24 22"><path d="M1 4 H8 L10 6 H20 V20 H1Z" fill="#e4e4e4" stroke="#bdbdbd"/><path d="M1 20 L4 10 H23 L20 20Z" fill="#ececec" stroke="#bdbdbd"/></svg>
<svg class="abs" style="left:410px;top:238px;overflow:visible" width="20" height="21" viewBox="0 0 20 21"><path d="M0.5 0.5 H19.5 V20.5 H2.5 L0.5 18.5Z" fill="#9c9c9c" stroke="#8a8a8a"/><rect x="4" y="1" width="12" height="8" fill="#dedede"/><rect x="4.5" y="13" width="11" height="7" fill="#d6d6d6"/><rect x="6" y="14" width="3" height="5" fill="#a0a0a0"/></svg>
<svg class="abs" style="left:436px;top:236px;overflow:visible" width="24" height="23" viewBox="0 0 24 23"><rect x="6.5" y="0.5" width="11" height="6" fill="#fff" stroke="#777"/><rect x="0.5" y="6.5" width="23" height="10" rx="2" fill="#f4f4f4" stroke="#666"/><rect x="4.5" y="5.5" width="15" height="5" fill="#58a9dd" stroke="#3a78a8"/><rect x="5.5" y="14.5" width="13" height="8" fill="#fff" stroke="#666"/><path d="M8 18 H16" stroke="#7a9ab8"/><rect x="19" y="10.5" width="2" height="1" fill="#555"/></svg>
<div class="abs" style="left:465px;top:238px;width:1px;height:21px;background:#c8c8c8"></div>
<div class="abs" style="left:527px;top:238px;width:1px;height:21px;background:#c8c8c8"></div>
<div class="abs" style="left:617px;top:238px;width:1px;height:21px;background:#c8c8c8"></div>
<div class="abs" style="left:652px;top:238px;width:1px;height:21px;background:#c8c8c8"></div>
<div class="abs" style="left:714px;top:238px;width:1px;height:21px;background:#c8c8c8"></div>
<svg class="abs" style="left:470px;top:236px;overflow:visible" width="24" height="24" viewBox="0 0 24 24"><defs><radialGradient id="sg" cx="0.5" cy="0.55" r="0.55"><stop offset="0" stop-color="#f2c018"/><stop offset="0.6" stop-color="#f6d45a"/><stop offset="1" stop-color="#f8e49a"/></radialGradient></defs>
<path d="M11.18 2.56 Q11.80 1.40 12.42 2.56 L15.27 7.83 L21.16 8.90 Q22.45 9.14 21.54 10.09 L17.41 14.42 L18.21 20.36 Q18.38 21.66 17.20 21.09 L11.80 18.50 L6.40 21.09 Q5.22 21.66 5.39 20.36 L6.19 14.42 L2.06 10.09 Q1.15 9.14 2.44 8.90 L8.33 7.83 Z" fill="url(#sg)" stroke="#8a7a50" stroke-width="1.1" stroke-linejoin="round"/></svg><svg class="abs" style="left:481px;top:247px;overflow:visible" width="13" height="13" viewBox="0 0 13 13"><rect x="4.5" y="0.5" width="4" height="12" fill="#3bb34a" stroke="#1d7a2a" stroke-width="0.8"/><rect x="0.5" y="4.5" width="12" height="4" fill="#3bb34a" stroke="#1d7a2a" stroke-width="0.8"/></svg>
<svg class="abs" style="left:498px;top:237px;overflow:visible" width="24" height="23" viewBox="0 0 24 23"><path d="M11.5 1 L14.6 8 L22.2 8.6 L16.4 13.6 L18.2 21.2 L11.5 17.2 L4.8 21.2 L6.6 13.6 L0.8 8.6 L8.4 8Z" fill="#dcdcdc" stroke="#c4c4c4" stroke-linejoin="round"/><path d="M15 15 L22 22 M22 15 L15 22" stroke="#9a9a9a" stroke-width="2.2"/></svg>
<svg class="abs" style="left:532px;top:237px;overflow:visible" width="24" height="23" viewBox="0 0 24 23"><rect x="0.5" y="1.5" width="23" height="20" fill="#f2f2f2" stroke="#aaa"/><rect x="0.5" y="1.5" width="23" height="4" fill="#c9c9c9" stroke="#aaa"/><path d="M6.5 5.5 V21.5" stroke="#bbb"/><path d="M12.5 5.5 V21.5" stroke="#bbb"/><path d="M18.5 5.5 V21.5" stroke="#bbb"/><path d="M0.5 9.5 H23.5" stroke="#bbb"/><path d="M0.5 13.5 H23.5" stroke="#bbb"/><path d="M0.5 17.5 H23.5" stroke="#bbb"/><circle cx="5" cy="3" r="2.5" fill="#ccc" stroke="#999"/></svg>
<svg class="abs" style="left:560px;top:237px;overflow:visible" width="24" height="23" viewBox="0 0 24 23"><rect x="0.5" y="1.5" width="23" height="20" fill="#f2f2f2" stroke="#aaa"/><rect x="0.5" y="1.5" width="23" height="4" fill="#c9c9c9" stroke="#aaa"/><path d="M6.5 5.5 V21.5" stroke="#bbb"/><path d="M12.5 5.5 V21.5" stroke="#bbb"/><path d="M18.5 5.5 V21.5" stroke="#bbb"/><path d="M0.5 9.5 H23.5" stroke="#bbb"/><path d="M0.5 13.5 H23.5" stroke="#bbb"/><path d="M0.5 17.5 H23.5" stroke="#bbb"/><circle cx="19" cy="3" r="2.5" fill="#ccc" stroke="#999"/></svg>
<svg class="abs" style="left:588px;top:237px;overflow:visible" width="24" height="23" viewBox="0 0 24 23"><rect x="0.5" y="1.5" width="23" height="20" fill="#f2f2f2" stroke="#aaa"/><rect x="0.5" y="1.5" width="23" height="4" fill="#c9c9c9" stroke="#aaa"/><path d="M6.5 5.5 V21.5" stroke="#bbb"/><path d="M12.5 5.5 V21.5" stroke="#bbb"/><path d="M18.5 5.5 V21.5" stroke="#bbb"/><path d="M0.5 9.5 H23.5" stroke="#bbb"/><path d="M0.5 13.5 H23.5" stroke="#bbb"/><path d="M0.5 17.5 H23.5" stroke="#bbb"/><circle cx="5" cy="3" r="2.5" fill="#ccc" stroke="#999"/><circle cx="19" cy="3" r="2.5" fill="#ccc" stroke="#999"/></svg>
<svg class="abs" style="left:622px;top:237px;overflow:visible" width="24" height="22" viewBox="0 0 24 22"><path d="M5 9 C8 3 18 2 20 9 C22 15 17 20 11 21" fill="none" stroke="#b4b4b4" stroke-width="4"/><path d="M1 4 L9 4 L4 13Z" fill="#b4b4b4"/></svg>
<svg class="abs" style="left:656px;top:236px;overflow:visible" width="24" height="24" viewBox="0 0 24 24"><path d="M0.5 0.5 H9 L13.5 5 V16.5 H0.5Z" fill="#fff" stroke="#888"/><path d="M7.5 6.5 H16 L20.5 11 V23.5 H7.5Z" fill="#fff" stroke="#888"/><path d="M10 13 H18 M10 15.5 H18 M10 18 H18 M10 20.5 H18" stroke="#5a9ad0"/><path d="M3 4 H8 M3 6.5 H10 M3 9 H10" stroke="#9ab"/></svg>
<svg class="abs" style="left:684px;top:236px;overflow:visible" width="24" height="24" viewBox="0 0 24 24"><rect x="0.5" y="2.5" width="17" height="20" rx="2" fill="#c8965a" stroke="#8a6030"/><rect x="5" y="0.5" width="8" height="4" rx="1" fill="#e8e8e8" stroke="#777"/><path d="M8.5 8.5 H17 L21.5 13 V23.5 H8.5Z" fill="#fff" stroke="#888"/><path d="M11 15 H19 M11 17.5 H19 M11 20 H19" stroke="#5a9ad0"/></svg>
<div class="abs" style="left:718px;top:239px;width:24px;height:6px;background:#111"></div><div class="abs" style="left:718px;top:251px;width:24px;height:6px;background:#111"></div>
<div class="abs" style="left:746px;top:245px;width:23px;height:6px;background:#111"></div><div class="abs" style="left:754px;top:237px;width:6px;height:22px;background:#111"></div>
<svg class="abs" style="left:776px;top:238px;overflow:visible" width="21" height="20" viewBox="0 0 21 20"><path d="M2.5 2.5 L18.5 17.5 M18.5 2.5 L2.5 17.5" stroke="#111" stroke-width="5"/></svg>
<div class="abs" style="left:801px;top:237px;width:60px;height:23px;border:1px solid #7a7a7a;background:#fff"></div>
<div class="abs" style="left:865px;top:243px;width:4px;height:4px;border:1px solid #444;border-radius:50%"></div>
<div class="abs" style="left:378px;top:265px;width:28px;height:28px;border:1px solid #3f7bab;background:#e8f2fa"></div>
<svg class="abs" style="left:380px;top:270px;overflow:visible" width="23" height="20" viewBox="0 0 23 20"><rect x="0.5" y="0.5" width="22" height="19" fill="#fff" stroke="#6a6a6a"/><rect x="1" y="1" width="21" height="3" fill="#8fb0e0"/></svg>
<svg class="abs" style="left:408px;top:270px;overflow:visible" width="23" height="20" viewBox="0 0 23 20"><rect x="0.5" y="0.5" width="22" height="8" fill="#fff" stroke="#6a6a6a"/><rect x="1" y="1" width="21" height="3" fill="#8fb0e0"/><rect x="0.5" y="11.5" width="22" height="8" fill="#fff" stroke="#6a6a6a"/><rect x="1" y="12" width="21" height="3" fill="#8fb0e0"/></svg>
<svg class="abs" style="left:436px;top:270px;overflow:visible" width="23" height="20" viewBox="0 0 23 20"><rect x="0.5" y="0.5" width="10" height="19" fill="#fff" stroke="#6a6a6a"/><rect x="1" y="1" width="9" height="3" fill="#8fb0e0"/><rect x="12.5" y="0.5" width="10" height="19" fill="#fff" stroke="#6a6a6a"/><rect x="13" y="1" width="9" height="3" fill="#8fb0e0"/></svg>
<div class="abs" style="left:465px;top:268px;width:1px;height:21px;background:#c8c8c8"></div>
<div class="abs" style="left:468px;top:265px;width:28px;height:28px;border:1px solid #3f7bab;background:#e8f2fa"></div>
<svg class="abs" style="left:471px;top:269px;overflow:visible" width="23" height="20" viewBox="0 0 23 20"><rect x="0.5" y="0.5" width="22" height="19" fill="#fff" stroke="#6a7a9a"/><rect x="1" y="1" width="21" height="4" fill="#7f9ee0"/><rect x="1" y="5" width="5" height="14" fill="#8fa8e6"/><path d="M1 8.5 H22" stroke="#b8c4e8"/><path d="M1 11.5 H22" stroke="#b8c4e8"/><path d="M1 14.5 H22" stroke="#b8c4e8"/><path d="M1 17.5 H22" stroke="#b8c4e8"/><path d="M6.5 5 V19" stroke="#b8c4e8"/><path d="M13.5 5 V19" stroke="#b8c4e8"/></svg>
<svg class="abs" style="left:500px;top:267px;overflow:visible" width="22" height="23" viewBox="0 0 22 23"><defs><linearGradient id="dg1" x1="0.3" y1="0" x2="0.5" y2="1"><stop offset="0" stop-color="#e89a10"/><stop offset="0.4" stop-color="#d8d818"/><stop offset="1" stop-color="#18d418"/></linearGradient></defs><path d="M1.5 12.5 L11 2.5 C13.5 0.5 17 1.5 18.5 5 L20.5 13.5 L12 22.5Z" fill="url(#dg1)"/></svg>
<svg class="abs" style="left:527px;top:269px;overflow:visible" width="23" height="22" viewBox="0 0 23 22"><path d="M1 0 V20.5 H22" fill="none" stroke="#111" stroke-width="1"/><path d="M3 12 L7 6 L12 15 L18 3" fill="none" stroke="#333" stroke-width="1.1"/><path d="M3 16 L9 11 L14 14 L20 8" fill="none" stroke="#aab8c8" stroke-width="1.1"/></svg>
<svg class="abs" style="left:579px;top:262px;overflow:visible" width="22" height="30" viewBox="0 0 22 30"><path d="M0.5 10.5 L4.5 7 V9.1 H9 V11.9 H4.5 V14Z" fill="#7fb0dc" stroke="#5b80a8" stroke-width="0.8"/><circle cx="10.5" cy="14" r="1.2" fill="#3f4c5a"/><ellipse cx="16.7" cy="10.4" rx="3.3" ry="4.1" fill="#d8ecfa" stroke="#5b80a8" stroke-width="2"/><circle cx="2" cy="26" r="1.2" fill="#3f4c5a"/><ellipse cx="7.4" cy="22.4" rx="3.3" ry="4.1" fill="#d8ecfa" stroke="#5b80a8" stroke-width="2"/><ellipse cx="16.7" cy="22.4" rx="3.3" ry="4.1" fill="#d8ecfa" stroke="#5b80a8" stroke-width="2"/></svg>
<svg class="abs" style="left:607px;top:262px;overflow:visible" width="22" height="30" viewBox="0 0 22 30"><circle cx="1.8" cy="14" r="1.2" fill="#3f4c5a"/><ellipse cx="6.8" cy="10.4" rx="3.3" ry="4.1" fill="#d8ecfa" stroke="#5b80a8" stroke-width="2"/><ellipse cx="16.6" cy="10.4" rx="3.3" ry="4.1" fill="#d8ecfa" stroke="#5b80a8" stroke-width="2"/><path d="M0.5 21 H5 V18.8 L9.5 22.5 L5 26.2 V24 H0.5Z" fill="#7fb0dc" stroke="#5b80a8" stroke-width="0.8"/><circle cx="11" cy="26" r="1.2" fill="#3f4c5a"/><ellipse cx="16.6" cy="22.4" rx="3.3" ry="4.1" fill="#d8ecfa" stroke="#5b80a8" stroke-width="2"/></svg>
<svg class="abs" style="left:657px;top:268px;overflow:visible" width="22" height="23" viewBox="0 0 22 23"><defs><linearGradient id="dg2" x1="0.3" y1="0" x2="0.5" y2="1"><stop offset="0" stop-color="#e89a10"/><stop offset="0.4" stop-color="#d8d818"/><stop offset="1" stop-color="#18d418"/></linearGradient></defs><path d="M1.5 12.5 L11 2.5 C13.5 0.5 17 1.5 18.5 5 L20.5 13.5 L12 22.5Z" fill="url(#dg2)"/><path d="M0.5 4 V0.5 H4 M18 0.5 H21.5 V4 M21.5 19 V22.5 H18 M4 22.5 H0.5 V19" fill="none" stroke="#1a1a80" stroke-width="1.5"/></svg>
<svg class="abs" style="left:686px;top:268px;overflow:visible" width="22" height="23" viewBox="0 0 22 23"><defs><linearGradient id="dg3" x1="0.3" y1="0" x2="0.5" y2="1"><stop offset="0" stop-color="#e89a10"/><stop offset="0.4" stop-color="#d8d818"/><stop offset="1" stop-color="#18d418"/></linearGradient></defs><path d="M1.5 12.5 L11 2.5 C13.5 0.5 17 1.5 18.5 5 L20.5 13.5 L12 22.5Z" fill="url(#dg3)"/><path d="M1 1 V22 M21 1 V22" stroke="#1a1a80" stroke-width="2"/></svg>
<svg class="abs" style="left:714px;top:268px;overflow:visible" width="22" height="23" viewBox="0 0 22 23"><defs><linearGradient id="dg4" x1="0.3" y1="0" x2="0.5" y2="1"><stop offset="0" stop-color="#e89a10"/><stop offset="0.4" stop-color="#d8d818"/><stop offset="1" stop-color="#18d418"/></linearGradient></defs><path d="M1.5 12.5 L11 2.5 C13.5 0.5 17 1.5 18.5 5 L20.5 13.5 L12 22.5Z" fill="url(#dg4)"/><path d="M0 1 H22 M0 22 H22" stroke="#1a1a80" stroke-width="2"/></svg>
<svg class="abs" style="left:741px;top:268px;overflow:visible" width="22" height="23" viewBox="0 0 22 23"><rect x="4" y="4" width="14" height="15" fill="#5ae05a" stroke="#111" stroke-width="2"/><path d="M5 5 L17 18 M17 5 L5 18" stroke="#111" stroke-width="1"/><path d="M0.5 4 V0.5 H4 M18 0.5 H21.5 V4 M21.5 19 V22.5 H18 M4 22.5 H0.5 V19" fill="none" stroke="#1a1a80" stroke-width="1.5"/></svg>
<svg class="abs" style="left:769px;top:268px;overflow:visible" width="22" height="23" viewBox="0 0 22 23"><defs><linearGradient id="bg2" x1="0" y1="0" x2="1" y2="0"><stop offset="0" stop-color="#10d010"/><stop offset="1" stop-color="#f8f000"/></linearGradient></defs><rect x="4" y="4" width="14" height="15" fill="url(#bg2)" stroke="#111" stroke-width="2"/><path d="M1 1 V22 M21 1 V22" stroke="#1a1a80" stroke-width="2"/></svg>
<svg class="abs" style="left:797px;top:268px;overflow:visible" width="22" height="23" viewBox="0 0 22 23"><defs><linearGradient id="bg3" x1="0" y1="0" x2="0" y2="1"><stop offset="0" stop-color="#10d010"/><stop offset="1" stop-color="#f8f000"/></linearGradient></defs><rect x="4" y="4" width="14" height="15" fill="url(#bg3)" stroke="#111" stroke-width="2"/><path d="M0 1 H22 M0 22 H22" stroke="#1a1a80" stroke-width="2"/></svg>
<div class="t" style="left:393px;top:478px;transform:translate(-50%,-50%) rotate(-90deg);font-size:16.5px;line-height:18px;color:#3a3a3a;letter-spacing:1.05px">Engine Speed (rpm)</div>
<div class="abs cell" style="left:441px;top:338px;background:#1a74d4;color:#eaf6ff;box-shadow:-1px -1px 0 #8cb9e9">0.00</div>
<div class="abs cell" style="left:474px;top:338px;background:#f7a10f;box-shadow:-1px -1px 0 #f7a10f">0.00</div>
<div class="abs cell" style="left:507px;top:338px;background:#f7a10f;box-shadow:-1px -1px 0 #f7a10f">0.00</div>
<div class="abs cell" style="left:540px;top:338px;background:#f7a10f;box-shadow:-1px -1px 0 #f7a10f">0.00</div>
<div class="abs cell" style="left:573px;top:338px;background:#f7a10f;box-shadow:-1px -1px 0 #f7a10f">0.00</div>
<div class="abs cell" style="left:606px;top:338px;background:#f7a10f;box-shadow:-1px -1px 0 #f7a10f">0.00</div>
<div class="abs cell" style="left:639px;top:338px;background:#f7a10f;box-shadow:-1px -1px 0 #f7a10f">0.00</div>
<div class="abs cell" style="left:672px;top:338px;background:#f7a10f;box-shadow:-1px -1px 0 #f7a10f">0.00</div>
<div class="abs cell" style="left:705px;top:338px;background:#f7a10f;box-shadow:-1px -1px 0 #f7a10f">0.00</div>
<div class="abs cell" style="left:738px;top:338px;background:#f7a10f;box-shadow:-1px -1px 0 #f7a10f">0.00</div>
<div class="abs cell" style="left:771px;top:338px;background:#f7a10f;box-shadow:-1px -1px 0 #f7a10f">0.00</div>
<div class="abs cell" style="left:804px;top:338px;background:#f7a10f;box-shadow:-1px -1px 0 #f7a10f">0.00</div>
<div class="abs cell" style="left:837px;top:338px;background:#f7a10f;box-shadow:-1px -1px 0 #f7a10f">0.00</div>
<div class="abs cell" style="left:870px;top:338px;background:#f7a10f;box-shadow:-1px -1px 0 #f7a10f">0.00</div>
<div class="abs cell" style="left:903px;top:338px;background:#f7a10f;box-shadow:-1px -1px 0 #f7a10f">0.00</div>
<div class="abs cell" style="left:936px;top:338px;background:#f7a10f;box-shadow:-1px -1px 0 #f7a10f">0.00</div>
<div class="abs cell" style="left:441px;top:354px;background:#f7a10f;box-shadow:-1px -1px 0 #f7a10f">0.00</div>
<div class="abs cell" style="left:474px;top:354px;background:#f7a10f;box-shadow:-1px -1px 0 #f7a10f">0.00</div>
<div class="abs cell" style="left:507px;top:354px;background:#f7a10f;box-shadow:-1px -1px 0 #f7a10f">0.00</div>
<div class="abs cell" style="left:540px;top:354px;background:#f7a10f;box-shadow:-1px -1px 0 #f7a10f">0.00</div>
<div class="abs cell" style="left:573px;top:354px;background:#f7a10f;box-shadow:-1px -1px 0 #f7a10f">0.00</div>
<div class="abs cell" style="left:606px;top:354px;background:#f7a10f;box-shadow:-1px -1px 0 #f7a10f">0.00</div>
<div class="abs cell" style="left:639px;top:354px;background:#f7a10f;box-shadow:-1px -1px 0 #f7a10f">0.00</div>
<div class="abs cell" style="left:672px;top:354px;background:#f7a10f;box-shadow:-1px -1px 0 #f7a10f">0.00</div>
<div class="abs cell" style="left:705px;top:354px;background:#f7a10f;box-shadow:-1px -1px 0 #f7a10f">0.00</div>
<div class="abs cell" style="left:738px;top:354px;background:#f7a10f;box-shadow:-1px -1px 0 #f7a10f">0.00</div>
<div class="abs cell" style="left:771px;top:354px;background:#f7a10f;box-shadow:-1px -1px 0 #f7a10f">0.00</div>
<div class="abs cell" style="left:804px;top:354px;background:#f7a10f;box-shadow:-1px -1px 0 #f7a10f">0.00</div>
<div class="abs cell" style="left:837px;top:354px;background:#f7a10f;box-shadow:-1px -1px 0 #f7a10f">0.00</div>
<div class="abs cell" style="left:870px;top:354px;background:#f7a10f;box-shadow:-1px -1px 0 #f7a10f">0.00</div>
<div class="abs cell" style="left:903px;top:354px;background:#f7a10f;box-shadow:-1px -1px 0 #f7a10f">0.00</div>
<div class="abs cell" style="left:936px;top:354px;background:#f7a10f;box-shadow:-1px -1px 0 #f7a10f">0.00</div>
<div class="abs cell" style="left:441px;top:370px;background:#f7a10f;box-shadow:-1px -1px 0 #f7a10f">0.00</div>
<div class="abs cell" style="left:474px;top:370px;background:#f7a10f;box-shadow:-1px -1px 0 #f7a10f">0.00</div>
<div class="abs cell" style="left:507px;top:370px;background:#f7a10f;box-shadow:-1px -1px 0 #f7a10f">0.00</div>
<div class="abs cell" style="left:540px;top:370px;background:#f7a10f;box-shadow:-1px -1px 0 #f7a10f">0.00</div>
<div class="abs cell" style="left:573px;top:370px;background:#f7a10f;box-shadow:-1px -1px 0 #f7a10f">0.00</div>
<div class="abs cell" style="left:606px;top:370px;background:#f7a10f;box-shadow:-1px -1px 0 #f7a10f">0.00</div>
<div class="abs cell" style="left:639px;top:370px;background:#f7a10f;box-shadow:-1px -1px 0 #f7a10f">0.00</div>
<div class="abs cell" style="left:672px;top:370px;background:#f7a10f;box-shadow:-1px -1px 0 #f7a10f">0.00</div>
<div class="abs cell" style="left:705px;top:370px;background:#f6c414;box-shadow:-1px -1px 0 #f6c414">-0.51</div>
<div class="abs cell" style="left:738px;top:370px;background:#f8f200;box-shadow:-1px -1px 0 #f8f200">-1.01</div>
<div class="abs cell" style="left:771px;top:370px;background:#cdef1c;box-shadow:-1px -1px 0 #cdef1c">-1.52</div>
<div class="abs cell" style="left:804px;top:370px;background:#a6e828;box-shadow:-1px -1px 0 #a6e828">-2.00</div>
<div class="abs cell" style="left:837px;top:370px;background:#88e22a;box-shadow:-1px -1px 0 #88e22a">-2.51</div>
<div class="abs cell" style="left:870px;top:370px;background:#5edd2c;box-shadow:-1px -1px 0 #5edd2c">-3.01</div>
<div class="abs cell" style="left:903px;top:370px;background:#3edc2a;box-shadow:-1px -1px 0 #3edc2a">-3.49</div>
<div class="abs cell" style="left:936px;top:370px;background:#14de14;box-shadow:-1px -1px 0 #14de14">-4.00</div>
<div class="abs cell" style="left:441px;top:386px;background:#f7a10f;box-shadow:-1px -1px 0 #f7a10f">0.00</div>
<div class="abs cell" style="left:474px;top:386px;background:#f7a10f;box-shadow:-1px -1px 0 #f7a10f">0.00</div>
<div class="abs cell" style="left:507px;top:386px;background:#f7a10f;box-shadow:-1px -1px 0 #f7a10f">0.00</div>
<div class="abs cell" style="left:540px;top:386px;background:#f7a10f;box-shadow:-1px -1px 0 #f7a10f">0.00</div>
<div class="abs cell" style="left:573px;top:386px;background:#f7a10f;box-shadow:-1px -1px 0 #f7a10f">0.00</div>
<div class="abs cell" style="left:606px;top:386px;background:#f7a10f;box-shadow:-1px -1px 0 #f7a10f">0.00</div>
<div class="abs cell" style="left:639px;top:386px;background:#f7a10f;box-shadow:-1px -1px 0 #f7a10f">0.00</div>
<div class="abs cell" style="left:672px;top:386px;background:#f7a10f;box-shadow:-1px -1px 0 #f7a10f">0.00</div>
<div class="abs cell" style="left:705px;top:386px;background:#f6c414;box-shadow:-1px -1px 0 #f6c414">-0.51</div>
<div class="abs cell" style="left:738px;top:386px;background:#f8f200;box-shadow:-1px -1px 0 #f8f200">-1.01</div>
<div class="abs cell" style="left:771px;top:386px;background:#cdef1c;box-shadow:-1px -1px 0 #cdef1c">-1.52</div>
<div class="abs cell" style="left:804px;top:386px;background:#a6e828;box-shadow:-1px -1px 0 #a6e828">-2.00</div>
<div class="abs cell" style="left:837px;top:386px;background:#88e22a;box-shadow:-1px -1px 0 #88e22a">-2.51</div>
<div class="abs cell" style="left:870px;top:386px;background:#5edd2c;box-shadow:-1px -1px 0 #5edd2c">-3.01</div>
<div class="abs cell" style="left:903px;top:386px;background:#3edc2a;box-shadow:-1px -1px 0 #3edc2a">-3.49</div>
<div class="abs cell" style="left:936px;top:386px;background:#14de14;box-shadow:-1px -1px 0 #14de14">-4.00</div>
<div class="abs cell" style="left:441px;top:402px;background:#f7a10f;box-shadow:-1px -1px 0 #f7a10f">0.00</div>
<div class="abs cell" style="left:474px;top:402px;background:#f7a10f;box-shadow:-1px -1px 0 #f7a10f">0.00</div>
<div class="abs cell" style="left:507px;top:402px;background:#f7a10f;box-shadow:-1px -1px 0 #f7a10f">0.00</div>
<div class="abs cell" style="left:540px;top:402px;background:#f7a10f;box-shadow:-1px -1px 0 #f7a10f">0.00</div>
<div class="abs cell" style="left:573px;top:402px;background:#f7a10f;box-shadow:-1px -1px 0 #f7a10f">0.00</div>
<div class="abs cell" style="left:606px;top:402px;background:#f7a10f;box-shadow:-1px -1px 0 #f7a10f">0.00</div>
<div class="abs cell" style="left:639px;top:402px;background:#f7a10f;box-shadow:-1px -1px 0 #f7a10f">0.00</div>
<div class="abs cell" style="left:672px;top:402px;background:#f7a10f;box-shadow:-1px -1px 0 #f7a10f">0.00</div>
<div class="abs cell" style="left:705px;top:402px;background:#f6c414;box-shadow:-1px -1px 0 #f6c414">-0.51</div>
<div class="abs cell" style="left:738px;top:402px;background:#f8f200;box-shadow:-1px -1px 0 #f8f200">-1.01</div>
<div class="abs cell" style="left:771px;top:402px;background:#cdef1c;box-shadow:-1px -1px 0 #cdef1c">-1.52</div>
<div class="abs cell" style="left:804px;top:402px;background:#a6e828;box-shadow:-1px -1px 0 #a6e828">-2.00</div>
<div class="abs cell" style="left:837px;top:402px;background:#88e22a;box-shadow:-1px -1px 0 #88e22a">-2.51</div>
<div class="abs cell" style="left:870px;top:402px;background:#5edd2c;box-shadow:-1px -1px 0 #5edd2c">-3.01</div>
<div class="abs cell" style="left:903px;top:402px;background:#3edc2a;box-shadow:-1px -1px 0 #3edc2a">-3.49</div>
<div class="abs cell" style="left:936px;top:402px;background:#14de14;box-shadow:-1px -1px 0 #14de14">-4.00</div>
<div class="abs cell" style="left:441px;top:418px;background:#f7a10f;box-shadow:-1px -1px 0 #f7a10f">0.00</div>
<div class="abs cell" style="left:474px;top:418px;background:#f7a10f;box-shadow:-1px -1px 0 #f7a10f">0.00</div>
<div class="abs cell" style="left:507px;top:418px;background:#f7a10f;box-shadow:-1px -1px 0 #f7a10f">0.00</div>
<div class="abs cell" style="left:540px;top:418px;background:#f7a10f;box-shadow:-1px -1px 0 #f7a10f">0.00</div>
<div class="abs cell" style="left:573px;top:418px;background:#f7a10f;box-shadow:-1px -1px 0 #f7a10f">0.00</div>
<div class="abs cell" style="left:606px;top:418px;background:#f7a10f;box-shadow:-1px -1px 0 #f7a10f">0.00</div>
<div class="abs cell" style="left:639px;top:418px;background:#f7a10f;box-shadow:-1px -1px 0 #f7a10f">0.00</div>
<div class="abs cell" style="left:672px;top:418px;background:#f7a10f;box-shadow:-1px -1px 0 #f7a10f">0.00</div>
<div class="abs cell" style="left:705px;top:418px;background:#f6c414;box-shadow:-1px -1px 0 #f6c414">-0.51</div>
<div class="abs cell" style="left:738px;top:418px;background:#f8f200;box-shadow:-1px -1px 0 #f8f200">-1.01</div>
<div class="abs cell" style="left:771px;top:418px;background:#cdef1c;box-shadow:-1px -1px 0 #cdef1c">-1.52</div>
<div class="abs cell" style="left:804px;top:418px;background:#a6e828;box-shadow:-1px -1px 0 #a6e828">-2.00</div>
<div class="abs cell" style="left:837px;top:418px;background:#88e22a;box-shadow:-1px -1px 0 #88e22a">-2.51</div>
<div class="abs cell" style="left:870px;top:418px;background:#5edd2c;box-shadow:-1px -1px 0 #5edd2c">-3.01</div>
<div class="abs cell" style="left:903px;top:418px;background:#3edc2a;box-shadow:-1px -1px 0 #3edc2a">-3.49</div>
<div class="abs cell" style="left:936px;top:418px;background:#14de14;box-shadow:-1px -1px 0 #14de14">-4.00</div>
<div class="abs cell" style="left:441px;top:434px;background:#f7a10f;box-shadow:-1px -1px 0 #f7a10f">0.00</div>
<div class="abs cell" style="left:474px;top:434px;background:#f7a10f;box-shadow:-1px -1px 0 #f7a10f">0.00</div>
<div class="abs cell" style="left:507px;top:434px;background:#f7a10f;box-shadow:-1px -1px 0 #f7a10f">0.00</div>
<div class="abs cell" style="left:540px;top:434px;background:#f7a10f;box-shadow:-1px -1px 0 #f7a10f">0.00</div>
<div class="abs cell" style="left:573px;top:434px;background:#f7a10f;box-shadow:-1px -1px 0 #f7a10f">0.00</div>
<div class="abs cell" style="left:606px;top:434px;background:#f7a10f;box-shadow:-1px -1px 0 #f7a10f">0.00</div>
<div class="abs cell" style="left:639px;top:434px;background:#f7a10f;box-shadow:-1px -1px 0 #f7a10f">0.00</div>
<div class="abs cell" style="left:672px;top:434px;background:#f7a10f;box-shadow:-1px -1px 0 #f7a10f">0.00</div>
<div class="abs cell" style="left:705px;top:434px;background:#f6c414;box-shadow:-1px -1px 0 #f6c414">-0.51</div>
<div class="abs cell" style="left:738px;top:434px;background:#f8f200;box-shadow:-1px -1px 0 #f8f200">-1.01</div>
<div class="abs cell" style="left:771px;top:434px;background:#cdef1c;box-shadow:-1px -1px 0 #cdef1c">-1.52</div>
<div class="abs cell" style="left:804px;top:434px;background:#a6e828;box-shadow:-1px -1px 0 #a6e828">-2.00</div>
<div class="abs cell" style="left:837px;top:434px;background:#88e22a;box-shadow:-1px -1px 0 #88e22a">-2.51</div>
<div class="abs cell" style="left:870px;top:434px;background:#5edd2c;box-shadow:-1px -1px 0 #5edd2c">-3.01</div>
<div class="abs cell" style="left:903px;top:434px;background:#3edc2a;box-shadow:-1px -1px 0 #3edc2a">-3.49</div>
<div class="abs cell" style="left:936px;top:434px;background:#14de14;box-shadow:-1px -1px 0 #14de14">-4.00</div>
<div class="abs cell" style="left:441px;top:450px;background:#f7a10f;box-shadow:-1px -1px 0 #f7a10f">0.00</div>
<div class="abs cell" style="left:474px;top:450px;background:#f7a10f;box-shadow:-1px -1px 0 #f7a10f">0.00</div>
<div class="abs cell" style="left:507px;top:450px;background:#f7a10f;box-shadow:-1px -1px 0 #f7a10f">0.00</div>
<div class="abs cell" style="left:540px;top:450px;background:#f7a10f;box-shadow:-1px -1px 0 #f7a10f">0.00</div>
<div class="abs cell" style="left:573px;top:450px;background:#f7a10f;box-shadow:-1px -1px 0 #f7a10f">0.00</div>
<div class="abs cell" style="left:606px;top:450px;background:#f7a10f;box-shadow:-1px -1px 0 #f7a10f">0.00</div>
<div class="abs cell" style="left:639px;top:450px;background:#f7a10f;box-shadow:-1px -1px 0 #f7a10f">0.00</div>
<div class="abs cell" style="left:672px;top:450px;background:#f7a10f;box-shadow:-1px -1px 0 #f7a10f">0.00</div>
<div class="abs cell" style="left:705px;top:450px;background:#f6c414;box-shadow:-1px -1px 0 #f6c414">-0.51</div>
<div class="abs cell" style="left:738px;top:450px;background:#f8f200;box-shadow:-1px -1px 0 #f8f200">-1.01</div>
<div class="abs cell" style="left:771px;top:450px;background:#cdef1c;box-shadow:-1px -1px 0 #cdef1c">-1.52</div>
<div class="abs cell" style="left:804px;top:450px;background:#a6e828;box-shadow:-1px -1px 0 #a6e828">-2.00</div>
<div class="abs cell" style="left:837px;top:450px;background:#88e22a;box-shadow:-1px -1px 0 #88e22a">-2.51</div>
<div class="abs cell" style="left:870px;top:450px;background:#5edd2c;box-shadow:-1px -1px 0 #5edd2c">-3.01</div>
<div class="abs cell" style="left:903px;top:450px;background:#3edc2a;box-shadow:-1px -1px 0 #3edc2a">-3.49</div>
<div class="abs cell" style="left:936px;top:450px;background:#14de14;box-shadow:-1px -1px 0 #14de14">-4.00</div>
<div class="abs cell" style="left:441px;top:466px;background:#f7a10f;box-shadow:-1px -1px 0 #f7a10f">0.00</div>
<div class="abs cell" style="left:474px;top:466px;background:#f7a10f;box-shadow:-1px -1px 0 #f7a10f">0.00</div>
<div class="abs cell" style="left:507px;top:466px;background:#f7a10f;box-shadow:-1px -1px 0 #f7a10f">0.00</div>
<div class="abs cell" style="left:540px;top:466px;background:#f7a10f;box-shadow:-1px -1px 0 #f7a10f">0.00</div>
<div class="abs cell" style="left:573px;top:466px;background:#f7a10f;box-shadow:-1px -1px 0 #f7a10f">0.00</div>
<div class="abs cell" style="left:606px;top:466px;background:#f7a10f;box-shadow:-1px -1px 0 #f7a10f">0.00</div>
<div class="abs cell" style="left:639px;top:466px;background:#f7a10f;box-shadow:-1px -1px 0 #f7a10f">0.00</div>
<div class="abs cell" style="left:672px;top:466px;background:#f7a10f;box-shadow:-1px -1px 0 #f7a10f">0.00</div>
<div class="abs cell" style="left:705px;top:466px;background:#f6c414;box-shadow:-1px -1px 0 #f6c414">-0.51</div>
<div class="abs cell" style="left:738px;top:466px;background:#f8f200;box-shadow:-1px -1px 0 #f8f200">-1.01</div>
<div class="abs cell" style="left:771px;top:466px;background:#cdef1c;box-shadow:-1px -1px 0 #cdef1c">-1.52</div>
<div class="abs cell" style="left:804px;top:466px;background:#a6e828;box-shadow:-1px -1px 0 #a6e828">-2.00</div>
<div class="abs cell" style="left:837px;top:466px;background:#88e22a;box-shadow:-1px -1px 0 #88e22a">-2.51</div>
<div class="abs cell" style="left:870px;top:466px;background:#5edd2c;box-shadow:-1px -1px 0 #5edd2c">-3.01</div>
<div class="abs cell" style="left:903px;top:466px;background:#3edc2a;box-shadow:-1px -1px 0 #3edc2a">-3.49</div>
<div class="abs cell" style="left:936px;top:466px;background:#14de14;box-shadow:-1px -1px 0 #14de14">-4.00</div>
<div class="abs cell" style="left:441px;top:482px;background:#f7a10f;box-shadow:-1px -1px 0 #f7a10f">0.00</div>
<div class="abs cell" style="left:474px;top:482px;background:#f7a10f;box-shadow:-1px -1px 0 #f7a10f">0.00</div>
<div class="abs cell" style="left:507px;top:482px;background:#f7a10f;box-shadow:-1px -1px 0 #f7a10f">0.00</div>
<div class="abs cell" style="left:540px;top:482px;background:#f7a10f;box-shadow:-1px -1px 0 #f7a10f">0.00</div>
<div class="abs cell" style="left:573px;top:482px;background:#f7a10f;box-shadow:-1px -1px 0 #f7a10f">0.00</div>
<div class="abs cell" style="left:606px;top:482px;background:#f7a10f;box-shadow:-1px -1px 0 #f7a10f">0.00</div>
<div class="abs cell" style="left:639px;top:482px;background:#f7a10f;box-shadow:-1px -1px 0 #f7a10f">0.00</div>
<div class="abs cell" style="left:672px;top:482px;background:#f7a10f;box-shadow:-1px -1px 0 #f7a10f">0.00</div>
<div class="abs cell" style="left:705px;top:482px;background:#f6c414;box-shadow:-1px -1px 0 #f6c414">-0.51</div>
<div class="abs cell" style="left:738px;top:482px;background:#f8f200;box-shadow:-1px -1px 0 #f8f200">-1.01</div>
<div class="abs cell" style="left:771px;top:482px;background:#cdef1c;box-shadow:-1px -1px 0 #cdef1c">-1.52</div>
<div class="abs cell" style="left:804px;top:482px;background:#a6e828;box-shadow:-1px -1px 0 #a6e828">-2.00</div>
<div class="abs cell" style="left:837px;top:482px;background:#88e22a;box-shadow:-1px -1px 0 #88e22a">-2.51</div>
<div class="abs cell" style="left:870px;top:482px;background:#5edd2c;box-shadow:-1px -1px 0 #5edd2c">-3.01</div>
<div class="abs cell" style="left:903px;top:482px;background:#3edc2a;box-shadow:-1px -1px 0 #3edc2a">-3.49</div>
<div class="abs cell" style="left:936px;top:482px;background:#14de14;box-shadow:-1px -1px 0 #14de14">-4.00</div>
<div class="abs cell" style="left:441px;top:498px;background:#f7a10f;box-shadow:-1px -1px 0 #f7a10f">0.00</div>
<div class="abs cell" style="left:474px;top:498px;background:#f7a10f;box-shadow:-1px -1px 0 #f7a10f">0.00</div>
<div class="abs cell" style="left:507px;top:498px;background:#f7a10f;box-shadow:-1px -1px 0 #f7a10f">0.00</div>
<div class="abs cell" style="left:540px;top:498px;background:#f7a10f;box-shadow:-1px -1px 0 #f7a10f">0.00</div>
<div class="abs cell" style="left:573px;top:498px;background:#f7a10f;box-shadow:-1px -1px 0 #f7a10f">0.00</div>
<div class="abs cell" style="left:606px;top:498px;background:#f7a10f;box-shadow:-1px -1px 0 #f7a10f">0.00</div>
<div class="abs cell" style="left:639px;top:498px;background:#f7a10f;box-shadow:-1px -1px 0 #f7a10f">0.00</div>
<div class="abs cell" style="left:672px;top:498px;background:#f7a10f;box-shadow:-1px -1px 0 #f7a10f">0.00</div>
<div class="abs cell" style="left:705px;top:498px;background:#f6c414;box-shadow:-1px -1px 0 #f6c414">-0.51</div>
<div class="abs cell" style="left:738px;top:498px;background:#f8f200;box-shadow:-1px -1px 0 #f8f200">-1.01</div>
<div class="abs cell" style="left:771px;top:498px;background:#cdef1c;box-shadow:-1px -1px 0 #cdef1c">-1.52</div>
<div class="abs cell" style="left:804px;top:498px;background:#a6e828;box-shadow:-1px -1px 0 #a6e828">-2.00</div>
<div class="abs cell" style="left:837px;top:498px;background:#88e22a;box-shadow:-1px -1px 0 #88e22a">-2.51</div>
<div class="abs cell" style="left:870px;top:498px;background:#5edd2c;box-shadow:-1px -1px 0 #5edd2c">-3.01</div>
<div class="abs cell" style="left:903px;top:498px;background:#3edc2a;box-shadow:-1px -1px 0 #3edc2a">-3.49</div>
<div class="abs cell" style="left:936px;top:498px;background:#14de14;box-shadow:-1px -1px 0 #14de14">-4.00</div>
<div class="abs cell" style="left:441px;top:514px;background:#f7a10f;box-shadow:-1px -1px 0 #f7a10f">0.00</div>
<div class="abs cell" style="left:474px;top:514px;background:#f7a10f;box-shadow:-1px -1px 0 #f7a10f">0.00</div>
<div class="abs cell" style="left:507px;top:514px;background:#f7a10f;box-shadow:-1px -1px 0 #f7a10f">0.00</div>
<div class="abs cell" style="left:540px;top:514px;background:#f7a10f;box-shadow:-1px -1px 0 #f7a10f">0.00</div>
<div class="abs cell" style="left:573px;top:514px;background:#f7a10f;box-shadow:-1px -1px 0 #f7a10f">0.00</div>
<div class="abs cell" style="left:606px;top:514px;background:#f7a10f;box-shadow:-1px -1px 0 #f7a10f">0.00</div>
<div class="abs cell" style="left:639px;top:514px;background:#f7a10f;box-shadow:-1px -1px 0 #f7a10f">0.00</div>
<div class="abs cell" style="left:672px;top:514px;background:#f7a10f;box-shadow:-1px -1px 0 #f7a10f">0.00</div>
<div class="abs cell" style="left:705px;top:514px;background:#f6c414;box-shadow:-1px -1px 0 #f6c414">-0.51</div>
<div class="abs cell" style="left:738px;top:514px;background:#f8f200;box-shadow:-1px -1px 0 #f8f200">-1.01</div>
<div class="abs cell" style="left:771px;top:514px;background:#cdef1c;box-shadow:-1px -1px 0 #cdef1c">-1.52</div>
<div class="abs cell" style="left:804px;top:514px;background:#a6e828;box-shadow:-1px -1px 0 #a6e828">-2.00</div>
<div class="abs cell" style="left:837px;top:514px;background:#88e22a;box-shadow:-1px -1px 0 #88e22a">-2.51</div>
<div class="abs cell" style="left:870px;top:514px;background:#5edd2c;box-shadow:-1px -1px 0 #5edd2c">-3.01</div>
<div class="abs cell" style="left:903px;top:514px;background:#3edc2a;box-shadow:-1px -1px 0 #3edc2a">-3.49</div>
<div class="abs cell" style="left:936px;top:514px;background:#14de14;box-shadow:-1px -1px 0 #14de14">-4.00</div>
<div class="abs cell" style="left:441px;top:530px;background:#f7a10f;box-shadow:-1px -1px 0 #f7a10f">0.00</div>
<div class="abs cell" style="left:474px;top:530px;background:#f7a10f;box-shadow:-1px -1px 0 #f7a10f">0.00</div>
<div class="abs cell" style="left:507px;top:530px;background:#f7a10f;box-shadow:-1px -1px 0 #f7a10f">0.00</div>
<div class="abs cell" style="left:540px;top:530px;background:#f7a10f;box-shadow:-1px -1px 0 #f7a10f">0.00</div>
<div class="abs cell" style="left:573px;top:530px;background:#f7a10f;box-shadow:-1px -1px 0 #f7a10f">0.00</div>
<div class="abs cell" style="left:606px;top:530px;background:#f7a10f;box-shadow:-1px -1px 0 #f7a10f">0.00</div>
<div class="abs cell" style="left:639px;top:530px;background:#f7a10f;box-shadow:-1px -1px 0 #f7a10f">0.00</div>
<div class="abs cell" style="left:672px;top:530px;background:#f7a10f;box-shadow:-1px -1px 0 #f7a10f">0.00</div>
<div class="abs cell" style="left:705px;top:530px;background:#f6c414;box-shadow:-1px -1px 0 #f6c414">-0.51</div>
<div class="abs cell" style="left:738px;top:530px;background:#f8f200;box-shadow:-1px -1px 0 #f8f200">-1.01</div>
<div class="abs cell" style="left:771px;top:530px;background:#cdef1c;box-shadow:-1px -1px 0 #cdef1c">-1.52</div>
<div class="abs cell" style="left:804px;top:530px;background:#a6e828;box-shadow:-1px -1px 0 #a6e828">-2.00</div>
<div class="abs cell" style="left:837px;top:530px;background:#88e22a;box-shadow:-1px -1px 0 #88e22a">-2.51</div>
<div class="abs cell" style="left:870px;top:530px;background:#5edd2c;box-shadow:-1px -1px 0 #5edd2c">-3.01</div>
<div class="abs cell" style="left:903px;top:530px;background:#3edc2a;box-shadow:-1px -1px 0 #3edc2a">-3.49</div>
<div class="abs cell" style="left:936px;top:530px;background:#14de14;box-shadow:-1px -1px 0 #14de14">-4.00</div>
<div class="abs cell" style="left:441px;top:546px;background:#f7a10f;box-shadow:-1px -1px 0 #f7a10f">0.00</div>
<div class="abs cell" style="left:474px;top:546px;background:#f7a10f;box-shadow:-1px -1px 0 #f7a10f">0.00</div>
<div class="abs cell" style="left:507px;top:546px;background:#f7a10f;box-shadow:-1px -1px 0 #f7a10f">0.00</div>
<div class="abs cell" style="left:540px;top:546px;background:#f7a10f;box-shadow:-1px -1px 0 #f7a10f">0.00</div>
<div class="abs cell" style="left:573px;top:546px;background:#f7a10f;box-shadow:-1px -1px 0 #f7a10f">0.00</div>
<div class="abs cell" style="left:606px;top:546px;background:#f7a10f;box-shadow:-1px -1px 0 #f7a10f">0.00</div>
<div class="abs cell" style="left:639px;top:546px;background:#f7a10f;box-shadow:-1px -1px 0 #f7a10f">0.00</div>
<div class="abs cell" style="left:672px;top:546px;background:#f7a10f;box-shadow:-1px -1px 0 #f7a10f">0.00</div>
<div class="abs cell" style="left:705px;top:546px;background:#f6c414;box-shadow:-1px -1px 0 #f6c414">-0.51</div>
<div class="abs cell" style="left:738px;top:546px;background:#f8f200;box-shadow:-1px -1px 0 #f8f200">-1.01</div>
<div class="abs cell" style="left:771px;top:546px;background:#cdef1c;box-shadow:-1px -1px 0 #cdef1c">-1.52</div>
<div class="abs cell" style="left:804px;top:546px;background:#a6e828;box-shadow:-1px -1px 0 #a6e828">-2.00</div>
<div class="abs cell" style="left:837px;top:546px;background:#88e22a;box-shadow:-1px -1px 0 #88e22a">-2.51</div>
<div class="abs cell" style="left:870px;top:546px;background:#5edd2c;box-shadow:-1px -1px 0 #5edd2c">-3.01</div>
<div class="abs cell" style="left:903px;top:546px;background:#3edc2a;box-shadow:-1px -1px 0 #3edc2a">-3.49</div>
<div class="abs cell" style="left:936px;top:546px;background:#14de14;box-shadow:-1px -1px 0 #14de14">-4.00</div>
<div class="abs cell" style="left:441px;top:562px;background:#f7a10f;box-shadow:-1px -1px 0 #f7a10f">0.00</div>
<div class="abs cell" style="left:474px;top:562px;background:#f7a10f;box-shadow:-1px -1px 0 #f7a10f">0.00</div>
<div class="abs cell" style="left:507px;top:562px;background:#f7a10f;box-shadow:-1px -1px 0 #f7a10f">0.00</div>
<div class="abs cell" style="left:540px;top:562px;background:#f7a10f;box-shadow:-1px -1px 0 #f7a10f">0.00</div>
<div class="abs cell" style="left:573px;top:562px;background:#f7a10f;box-shadow:-1px -1px 0 #f7a10f">0.00</div>
<div class="abs cell" style="left:606px;top:562px;background:#f7a10f;box-shadow:-1px -1px 0 #f7a10f">0.00</div>
<div class="abs cell" style="left:639px;top:562px;background:#f7a10f;box-shadow:-1px -1px 0 #f7a10f">0.00</div>
<div class="abs cell" style="left:672px;top:562px;background:#f7a10f;box-shadow:-1px -1px 0 #f7a10f">0.00</div>
<div class="abs cell" style="left:705px;top:562px;background:#f6c414;box-shadow:-1px -1px 0 #f6c414">-0.51</div>
<div class="abs cell" style="left:738px;top:562px;background:#f8f200;box-shadow:-1px -1px 0 #f8f200">-1.01</div>
<div class="abs cell" style="left:771px;top:562px;background:#cdef1c;box-shadow:-1px -1px 0 #cdef1c">-1.52</div>
<div class="abs cell" style="left:804px;top:562px;background:#a6e828;box-shadow:-1px -1px 0 #a6e828">-2.00</div>
<div class="abs cell" style="left:837px;top:562px;background:#88e22a;box-shadow:-1px -1px 0 #88e22a">-2.51</div>
<div class="abs cell" style="left:870px;top:562px;background:#5edd2c;box-shadow:-1px -1px 0 #5edd2c">-3.01</div>
<div class="abs cell" style="left:903px;top:562px;background:#3edc2a;box-shadow:-1px -1px 0 #3edc2a">-3.49</div>
<div class="abs cell" style="left:936px;top:562px;background:#14de14;box-shadow:-1px -1px 0 #14de14">-4.00</div>
<div class="abs cell" style="left:441px;top:578px;background:#f7a10f;box-shadow:-1px -1px 0 #f7a10f">0.00</div>
<div class="abs cell" style="left:474px;top:578px;background:#f7a10f;box-shadow:-1px -1px 0 #f7a10f">0.00</div>
<div class="abs cell" style="left:507px;top:578px;background:#f7a10f;box-shadow:-1px -1px 0 #f7a10f">0.00</div>
<div class="abs cell" style="left:540px;top:578px;background:#f7a10f;box-shadow:-1px -1px 0 #f7a10f">0.00</div>
<div class="abs cell" style="left:573px;top:578px;background:#f7a10f;box-shadow:-1px -1px 0 #f7a10f">0.00</div>
<div class="abs cell" style="left:606px;top:578px;background:#f7a10f;box-shadow:-1px -1px 0 #f7a10f">0.00</div>
<div class="abs cell" style="left:639px;top:578px;background:#f7a10f;box-shadow:-1px -1px 0 #f7a10f">0.00</div>
<div class="abs cell" style="left:672px;top:578px;background:#f7a10f;box-shadow:-1px -1px 0 #f7a10f">0.00</div>
<div class="abs cell" style="left:705px;top:578px;background:#f6c414;box-shadow:-1px -1px 0 #f6c414">-0.51</div>
<div class="abs cell" style="left:738px;top:578px;background:#f8f200;box-shadow:-1px -1px 0 #f8f200">-1.01</div>
<div class="abs cell" style="left:771px;top:578px;background:#cdef1c;box-shadow:-1px -1px 0 #cdef1c">-1.52</div>
<div class="abs cell" style="left:804px;top:578px;background:#a6e828;box-shadow:-1px -1px 0 #a6e828">-2.00</div>
<div class="abs cell" style="left:837px;top:578px;background:#88e22a;box-shadow:-1px -1px 0 #88e22a">-2.51</div>
<div class="abs cell" style="left:870px;top:578px;background:#5edd2c;box-shadow:-1px -1px 0 #5edd2c">-3.01</div>
<div class="abs cell" style="left:903px;top:578px;background:#3edc2a;box-shadow:-1px -1px 0 #3edc2a">-3.49</div>
<div class="abs cell" style="left:936px;top:578px;background:#14de14;box-shadow:-1px -1px 0 #14de14">-4.00</div>
<div class="abs cell" style="left:441px;top:594px;background:#f7a10f;box-shadow:-1px -1px 0 #f7a10f">0.00</div>
<div class="abs cell" style="left:474px;top:594px;background:#f7a10f;box-shadow:-1px -1px 0 #f7a10f">0.00</div>
<div class="abs cell" style="left:507px;top:594px;background:#f7a10f;box-shadow:-1px -1px 0 #f7a10f">0.00</div>
<div class="abs cell" style="left:540px;top:594px;background:#f7a10f;box-shadow:-1px -1px 0 #f7a10f">0.00</div>
<div class="abs cell" style="left:573px;top:594px;background:#f7a10f;box-shadow:-1px -1px 0 #f7a10f">0.00</div>
<div class="abs cell" style="left:606px;top:594px;background:#f7a10f;box-shadow:-1px -1px 0 #f7a10f">0.00</div>
<div class="abs cell" style="left:639px;top:594px;background:#f7a10f;box-shadow:-1px -1px 0 #f7a10f">0.00</div>
<div class="abs cell" style="left:672px;top:594px;background:#f7a10f;box-shadow:-1px -1px 0 #f7a10f">0.00</div>
<div class="abs cell" style="left:705px;top:594px;background:#f6c414;box-shadow:-1px -1px 0 #f6c414">-0.51</div>
<div class="abs cell" style="left:738px;top:594px;background:#f8f200;box-shadow:-1px -1px 0 #f8f200">-1.01</div>
<div class="abs cell" style="left:771px;top:594px;background:#cdef1c;box-shadow:-1px -1px 0 #cdef1c">-1.52</div>
<div class="abs cell" style="left:804px;top:594px;background:#a6e828;box-shadow:-1px -1px 0 #a6e828">-2.00</div>
<div class="abs cell" style="left:837px;top:594px;background:#88e22a;box-shadow:-1px -1px 0 #88e22a">-2.51</div>
<div class="abs cell" style="left:870px;top:594px;background:#5edd2c;box-shadow:-1px -1px 0 #5edd2c">-3.01</div>
<div class="abs cell" style="left:903px;top:594px;background:#3edc2a;box-shadow:-1px -1px 0 #3edc2a">-3.49</div>
<div class="abs cell" style="left:936px;top:594px;background:#14de14;box-shadow:-1px -1px 0 #14de14">-4.00</div>
<div class="abs cell" style="left:441px;top:610px;background:#f7a10f;box-shadow:-1px -1px 0 #f7a10f">0.00</div>
<div class="abs cell" style="left:474px;top:610px;background:#f7a10f;box-shadow:-1px -1px 0 #f7a10f">0.00</div>
<div class="abs cell" style="left:507px;top:610px;background:#f7a10f;box-shadow:-1px -1px 0 #f7a10f">0.00</div>
<div class="abs cell" style="left:540px;top:610px;background:#f7a10f;box-shadow:-1px -1px 0 #f7a10f">0.00</div>
<div class="abs cell" style="left:573px;top:610px;background:#f7a10f;box-shadow:-1px -1px 0 #f7a10f">0.00</div>
<div class="abs cell" style="left:606px;top:610px;background:#f7a10f;box-shadow:-1px -1px 0 #f7a10f">0.00</div>
<div class="abs cell" style="left:639px;top:610px;background:#f7a10f;box-shadow:-1px -1px 0 #f7a10f">0.00</div>
<div class="abs cell" style="left:672px;top:610px;background:#f7a10f;box-shadow:-1px -1px 0 #f7a10f">0.00</div>
<div class="abs cell" style="left:705px;top:610px;background:#f6c414;box-shadow:-1px -1px 0 #f6c414">-0.51</div>
<div class="abs cell" style="left:738px;top:610px;background:#f8f200;box-shadow:-1px -1px 0 #f8f200">-1.01</div>
<div class="abs cell" style="left:771px;top:610px;background:#cdef1c;box-shadow:-1px -1px 0 #cdef1c">-1.52</div>
<div class="abs cell" style="left:804px;top:610px;background:#a6e828;box-shadow:-1px -1px 0 #a6e828">-2.00</div>
<div class="abs cell" style="left:837px;top:610px;background:#88e22a;box-shadow:-1px -1px 0 #88e22a">-2.51</div>
<div class="abs cell" style="left:870px;top:610px;background:#5edd2c;box-shadow:-1px -1px 0 #5edd2c">-3.01</div>
<div class="abs cell" style="left:903px;top:610px;background:#3edc2a;box-shadow:-1px -1px 0 #3edc2a">-3.49</div>
<div class="abs cell" style="left:936px;top:610px;background:#14de14;box-shadow:-1px -1px 0 #14de14">-4.00</div>
<div class="abs cell" style="left:441px;top:626px;background:#f7a10f;box-shadow:-1px -1px 0 #f7a10f">0.00</div>
<div class="abs cell" style="left:474px;top:626px;background:#f7a10f;box-shadow:-1px -1px 0 #f7a10f">0.00</div>
<div class="abs cell" style="left:507px;top:626px;background:#f7a10f;box-shadow:-1px -1px 0 #f7a10f">0.00</div>
<div class="abs cell" style="left:540px;top:626px;background:#f7a10f;box-shadow:-1px -1px 0 #f7a10f">0.00</div>
<div class="abs cell" style="left:573px;top:626px;background:#f7a10f;box-shadow:-1px -1px 0 #f7a10f">0.00</div>
<div class="abs cell" style="left:606px;top:626px;background:#f7a10f;box-shadow:-1px -1px 0 #f7a10f">0.00</div>
<div class="abs cell" style="left:639px;top:626px;background:#f7a10f;box-shadow:-1px -1px 0 #f7a10f">0.00</div>
<div class="abs cell" style="left:672px;top:626px;background:#f7a10f;box-shadow:-1px -1px 0 #f7a10f">0.00</div>
<div class="abs cell" style="left:705px;top:626px;background:#f6c414;box-shadow:-1px -1px 0 #f6c414">-0.51</div>
<div class="abs cell" style="left:738px;top:626px;background:#f8f200;box-shadow:-1px -1px 0 #f8f200">-1.01</div>
<div class="abs cell" style="left:771px;top:626px;background:#cdef1c;box-shadow:-1px -1px 0 #cdef1c">-1.52</div>
<div class="abs cell" style="left:804px;top:626px;background:#a6e828;box-shadow:-1px -1px 0 #a6e828">-2.00</div>
<div class="abs cell" style="left:837px;top:626px;background:#88e22a;box-shadow:-1px -1px 0 #88e22a">-2.51</div>
<div class="abs cell" style="left:870px;top:626px;background:#5edd2c;box-shadow:-1px -1px 0 #5edd2c">-3.01</div>
<div class="abs cell" style="left:903px;top:626px;background:#3edc2a;box-shadow:-1px -1px 0 #3edc2a">-3.49</div>
<div class="abs cell" style="left:936px;top:626px;background:#14de14;box-shadow:-1px -1px 0 #14de14">-4.00</div>
<div class="abs cell" style="left:441px;top:642px;background:#f7a10f;box-shadow:-1px -1px 0 #f7a10f">0.00</div>
<div class="abs cell" style="left:474px;top:642px;background:#f7a10f;box-shadow:-1px -1px 0 #f7a10f">0.00</div>
<div class="abs cell" style="left:507px;top:642px;background:#f7a10f;box-shadow:-1px -1px 0 #f7a10f">0.00</div>
<div class="abs cell" style="left:540px;top:642px;background:#f7a10f;box-shadow:-1px -1px 0 #f7a10f">0.00</div>
<div class="abs cell" style="left:573px;top:642px;background:#f7a10f;box-shadow:-1px -1px 0 #f7a10f">0.00</div>
<div class="abs cell" style="left:606px;top:642px;background:#f7a10f;box-shadow:-1px -1px 0 #f7a10f">0.00</div>
<div class="abs cell" style="left:639px;top:642px;background:#f7a10f;box-shadow:-1px -1px 0 #f7a10f">0.00</div>
<div class="abs cell" style="left:672px;top:642px;background:#f7a10f;box-shadow:-1px -1px 0 #f7a10f">0.00</div>
<div class="abs cell" style="left:705px;top:642px;background:#f6c414;box-shadow:-1px -1px 0 #f6c414">-0.51</div>
<div class="abs cell" style="left:738px;top:642px;background:#f8f200;box-shadow:-1px -1px 0 #f8f200">-1.01</div>
<div class="abs cell" style="left:771px;top:642px;background:#cdef1c;box-shadow:-1px -1px 0 #cdef1c">-1.52</div>
<div class="abs cell" style="left:804px;top:642px;background:#a6e828;box-shadow:-1px -1px 0 #a6e828">-2.00</div>
<div class="abs cell" style="left:837px;top:642px;background:#88e22a;box-shadow:-1px -1px 0 #88e22a">-2.51</div>
<div class="abs cell" style="left:870px;top:642px;background:#5edd2c;box-shadow:-1px -1px 0 #5edd2c">-3.01</div>
<div class="abs cell" style="left:903px;top:642px;background:#3edc2a;box-shadow:-1px -1px 0 #3edc2a">-3.49</div>
<div class="abs cell" style="left:936px;top:642px;background:#14de14;box-shadow:-1px -1px 0 #14de14">-4.00</div>
<div class="abs" style="left:473px;top:338px;width:1px;height:320px;background:rgba(255,255,255,0.55)"></div>
<div class="abs" style="left:506px;top:338px;width:1px;height:320px;background:rgba(255,255,255,0.55)"></div>
<div class="abs" style="left:539px;top:338px;width:1px;height:320px;background:rgba(255,255,255,0.55)"></div>
<div class="abs" style="left:572px;top:338px;width:1px;height:320px;background:rgba(255,255,255,0.55)"></div>
<div class="abs" style="left:605px;top:338px;width:1px;height:320px;background:rgba(255,255,255,0.55)"></div>
<div class="abs" style="left:638px;top:338px;width:1px;height:320px;background:rgba(255,255,255,0.55)"></div>
<div class="abs" style="left:671px;top:338px;width:1px;height:320px;background:rgba(255,255,255,0.55)"></div>
<div class="abs" style="left:704px;top:338px;width:1px;height:320px;background:rgba(255,255,255,0.55)"></div>
<div class="abs" style="left:737px;top:338px;width:1px;height:320px;background:rgba(255,255,255,0.55)"></div>
<div class="abs" style="left:770px;top:338px;width:1px;height:320px;background:rgba(255,255,255,0.55)"></div>
<div class="abs" style="left:803px;top:338px;width:1px;height:320px;background:rgba(255,255,255,0.55)"></div>
<div class="abs" style="left:836px;top:338px;width:1px;height:320px;background:rgba(255,255,255,0.55)"></div>
<div class="abs" style="left:869px;top:338px;width:1px;height:320px;background:rgba(255,255,255,0.55)"></div>
<div class="abs" style="left:902px;top:338px;width:1px;height:320px;background:rgba(255,255,255,0.55)"></div>
<div class="abs" style="left:935px;top:338px;width:1px;height:320px;background:rgba(255,255,255,0.55)"></div>
<div class="abs" style="left:968px;top:338px;width:1px;height:320px;background:rgba(255,255,255,0.55)"></div>
<div class="abs" style="left:441px;top:353px;width:528px;height:1px;background:rgba(255,255,255,0.55)"></div>
<div class="abs" style="left:441px;top:369px;width:528px;height:1px;background:rgba(255,255,255,0.55)"></div>
<div class="abs" style="left:441px;top:385px;width:528px;height:1px;background:rgba(255,255,255,0.55)"></div>
<div class="abs" style="left:441px;top:401px;width:528px;height:1px;background:rgba(255,255,255,0.55)"></div>
<div class="abs" style="left:441px;top:417px;width:528px;height:1px;background:rgba(255,255,255,0.55)"></div>
<div class="abs" style="left:441px;top:433px;width:528px;height:1px;background:rgba(255,255,255,0.55)"></div>
<div class="abs" style="left:441px;top:449px;width:528px;height:1px;background:rgba(255,255,255,0.55)"></div>
<div class="abs" style="left:441px;top:465px;width:528px;height:1px;background:rgba(255,255,255,0.55)"></div>
<div class="abs" style="left:441px;top:481px;width:528px;height:1px;background:rgba(255,255,255,0.55)"></div>
<div class="abs" style="left:441px;top:497px;width:528px;height:1px;background:rgba(255,255,255,0.55)"></div>
<div class="abs" style="left:441px;top:513px;width:528px;height:1px;background:rgba(255,255,255,0.55)"></div>
<div class="abs" style="left:441px;top:529px;width:528px;height:1px;background:rgba(255,255,255,0.55)"></div>
<div class="abs" style="left:441px;top:545px;width:528px;height:1px;background:rgba(255,255,255,0.55)"></div>
<div class="abs" style="left:441px;top:561px;width:528px;height:1px;background:rgba(255,255,255,0.55)"></div>
<div class="abs" style="left:441px;top:577px;width:528px;height:1px;background:rgba(255,255,255,0.55)"></div>
<div class="abs" style="left:441px;top:593px;width:528px;height:1px;background:rgba(255,255,255,0.55)"></div>
<div class="abs" style="left:441px;top:609px;width:528px;height:1px;background:rgba(255,255,255,0.55)"></div>
<div class="abs" style="left:441px;top:625px;width:528px;height:1px;background:rgba(255,255,255,0.55)"></div>
<div class="abs" style="left:441px;top:641px;width:528px;height:1px;background:rgba(255,255,255,0.55)"></div>
<div class="abs" style="left:441px;top:657px;width:528px;height:1px;background:rgba(255,255,255,0.55)"></div>
<div class="abs" style="left:968px;top:338px;width:1px;height:320px;background:#f4fff0"></div>
<div class="abs" style="left:441px;top:657px;width:528px;height:1px;background:#fff8e8"></div>
<div class="abs" style="left:404px;top:321px;width:565px;height:17px;background:#f0f0f0;border:1px solid #a0a0a0;border-right-color:#c8c8c8"></div>
<div class="abs" style="left:404px;top:321px;width:37px;height:337px;background:#f0f0f0;border:1px solid #a0a0a0;border-bottom-color:#b8b8b8"></div>
<div class="abs" style="left:440px;top:321px;width:1px;height:16px;background:#a0a0a0"></div>
<div class="abs c" style="left:441px;top:321px;width:33px;height:16px;color:#111">0.80</div>
<div class="abs" style="left:473px;top:321px;width:1px;height:16px;background:#a0a0a0"></div>
<div class="abs c" style="left:474px;top:321px;width:33px;height:16px;color:#111">0.85</div>
<div class="abs" style="left:506px;top:321px;width:1px;height:16px;background:#a0a0a0"></div>
<div class="abs c" style="left:507px;top:321px;width:33px;height:16px;color:#111">0.90</div>
<div class="abs" style="left:539px;top:321px;width:1px;height:16px;background:#a0a0a0"></div>
<div class="abs c" style="left:540px;top:321px;width:33px;height:16px;color:#111">0.95</div>
<div class="abs" style="left:572px;top:321px;width:1px;height:16px;background:#a0a0a0"></div>
<div class="abs c" style="left:573px;top:321px;width:33px;height:16px;color:#111">1.00</div>
<div class="abs" style="left:605px;top:321px;width:1px;height:16px;background:#a0a0a0"></div>
<div class="abs c" style="left:606px;top:321px;width:33px;height:16px;color:#111">1.05</div>
<div class="abs" style="left:638px;top:321px;width:1px;height:16px;background:#a0a0a0"></div>
<div class="abs c" style="left:639px;top:321px;width:33px;height:16px;color:#111">1.10</div>
<div class="abs" style="left:671px;top:321px;width:1px;height:16px;background:#a0a0a0"></div>
<div class="abs c" style="left:672px;top:321px;width:33px;height:16px;color:#111">1.15</div>
<div class="abs" style="left:704px;top:321px;width:1px;height:16px;background:#a0a0a0"></div>
<div class="abs c" style="left:705px;top:321px;width:33px;height:16px;color:#111">1.20</div>
<div class="abs" style="left:737px;top:321px;width:1px;height:16px;background:#a0a0a0"></div>
<div class="abs c" style="left:738px;top:321px;width:33px;height:16px;color:#111">1.25</div>
<div class="abs" style="left:770px;top:321px;width:1px;height:16px;background:#a0a0a0"></div>
<div class="abs c" style="left:771px;top:321px;width:33px;height:16px;color:#111">1.30</div>
<div class="abs" style="left:803px;top:321px;width:1px;height:16px;background:#a0a0a0"></div>
<div class="abs c" style="left:804px;top:321px;width:33px;height:16px;color:#111">1.35</div>
<div class="abs" style="left:836px;top:321px;width:1px;height:16px;background:#a0a0a0"></div>
<div class="abs c" style="left:837px;top:321px;width:33px;height:16px;color:#111">1.40</div>
<div class="abs" style="left:869px;top:321px;width:1px;height:16px;background:#a0a0a0"></div>
<div class="abs c" style="left:870px;top:321px;width:33px;height:16px;color:#111">1.45</div>
<div class="abs" style="left:902px;top:321px;width:1px;height:16px;background:#a0a0a0"></div>
<div class="abs c" style="left:903px;top:321px;width:33px;height:16px;color:#111">1.50</div>
<div class="abs" style="left:935px;top:321px;width:1px;height:16px;background:#a0a0a0"></div>
<div class="abs c" style="left:936px;top:321px;width:33px;height:16px;color:#111">1.55</div>
<div class="abs" style="left:404px;top:337px;width:36px;height:1px;background:#a0a0a0"></div>
<div class="abs c" style="left:404px;top:337px;width:37px;height:16px;color:#111">400</div>
<div class="abs" style="left:404px;top:353px;width:36px;height:1px;background:#a0a0a0"></div>
<div class="abs c" style="left:404px;top:353px;width:37px;height:16px;color:#111">800</div>
<div class="abs" style="left:404px;top:369px;width:36px;height:1px;background:#a0a0a0"></div>
<div class="abs c" style="left:404px;top:369px;width:37px;height:16px;color:#111">1,200</div>
<div class="abs" style="left:404px;top:385px;width:36px;height:1px;background:#a0a0a0"></div>
<div class="abs c" style="left:404px;top:385px;width:37px;height:16px;color:#111">1,600</div>
<div class="abs" style="left:404px;top:401px;width:36px;height:1px;background:#a0a0a0"></div>
<div class="abs c" style="left:404px;top:401px;width:37px;height:16px;color:#111">2,000</div>
<div class="abs" style="left:404px;top:417px;width:36px;height:1px;background:#a0a0a0"></div>
<div class="abs c" style="left:404px;top:417px;width:37px;height:16px;color:#111">2,400</div>
<div class="abs" style="left:404px;top:433px;width:36px;height:1px;background:#a0a0a0"></div>
<div class="abs c" style="left:404px;top:433px;width:37px;height:16px;color:#111">2,800</div>
<div class="abs" style="left:404px;top:449px;width:36px;height:1px;background:#a0a0a0"></div>
<div class="abs c" style="left:404px;top:449px;width:37px;height:16px;color:#111">3,200</div>
<div class="abs" style="left:404px;top:465px;width:36px;height:1px;background:#a0a0a0"></div>
<div class="abs c" style="left:404px;top:465px;width:37px;height:16px;color:#111">3,600</div>
<div class="abs" style="left:404px;top:481px;width:36px;height:1px;background:#a0a0a0"></div>
<div class="abs c" style="left:404px;top:481px;width:37px;height:16px;color:#111">4,000</div>
<div class="abs" style="left:404px;top:497px;width:36px;height:1px;background:#a0a0a0"></div>
<div class="abs c" style="left:404px;top:497px;width:37px;height:16px;color:#111">4,400</div>
<div class="abs" style="left:404px;top:513px;width:36px;height:1px;background:#a0a0a0"></div>
<div class="abs c" style="left:404px;top:513px;width:37px;height:16px;color:#111">4,800</div>
<div class="abs" style="left:404px;top:529px;width:36px;height:1px;background:#a0a0a0"></div>
<div class="abs c" style="left:404px;top:529px;width:37px;height:16px;color:#111">5,200</div>
<div class="abs" style="left:404px;top:545px;width:36px;height:1px;background:#a0a0a0"></div>
<div class="abs c" style="left:404px;top:545px;width:37px;height:16px;color:#111">5,600</div>
<div class="abs" style="left:404px;top:561px;width:36px;height:1px;background:#a0a0a0"></div>
<div class="abs c" style="left:404px;top:561px;width:37px;height:16px;color:#111">6,000</div>
<div class="abs" style="left:404px;top:577px;width:36px;height:1px;background:#a0a0a0"></div>
<div class="abs c" style="left:404px;top:577px;width:37px;height:16px;color:#111">6,400</div>
<div class="abs" style="left:404px;top:593px;width:36px;height:1px;background:#a0a0a0"></div>
<div class="abs c" style="left:404px;top:593px;width:37px;height:16px;color:#111">6,800</div>
<div class="abs" style="left:404px;top:609px;width:36px;height:1px;background:#a0a0a0"></div>
<div class="abs c" style="left:404px;top:609px;width:37px;height:16px;color:#111">7,200</div>
<div class="abs" style="left:404px;top:625px;width:36px;height:1px;background:#a0a0a0"></div>
<div class="abs c" style="left:404px;top:625px;width:37px;height:16px;color:#111">7,600</div>
<div class="abs" style="left:404px;top:641px;width:36px;height:1px;background:#a0a0a0"></div>
<div class="abs c" style="left:404px;top:641px;width:37px;height:16px;color:#111">8,000</div>
<svg class="abs" style="left:9px;top:1000px;overflow:visible" width="16" height="16" viewBox="0 0 16 16"><path d="M0 2.2 L6.6 1.3 V7.5 H0Z M7.6 1.1 L16 0 V7.5 H7.6Z M0 8.5 H6.6 V14.7 L0 13.8Z M7.6 8.5 H16 V16 L7.6 14.9Z" fill="#fff"/></svg>
<svg class="abs" style="left:45px;top:1000px;overflow:visible" width="17" height="17" viewBox="0 0 17 17"><circle cx="10.5" cy="6.5" r="5.3" fill="none" stroke="#fff" stroke-width="1.4"/><path d="M6.8 10.2 L1 16" stroke="#fff" stroke-width="1.6"/></svg>
<svg class="abs" style="left:81px;top:1000px;overflow:visible" width="16" height="16" viewBox="0 0 16 16"><circle cx="8" cy="8" r="6.6" fill="none" stroke="#fff" stroke-width="2"/></svg>
<svg class="abs" style="left:117px;top:1000px;overflow:visible" width="17" height="16" viewBox="0 0 17 16"><path d="M0.5 0 V3 M0.5 13 V16 M11 0 V3 M11 13 V16" stroke="#fff" stroke-width="1.2"/><rect x="1.5" y="3.5" width="9" height="9" fill="none" stroke="#fff" stroke-width="1.2"/><path d="M15 0 V2 M15 6 V16" stroke="#fff" stroke-width="1.3"/><rect x="13.8" y="3" width="2.4" height="2.4" fill="#fff"/><path d="M0 3.5 H11 M0 12.5 H11" stroke="#fff" stroke-width="1.2"/></svg>
<svg class="abs" style="left:155px;top:1000px;overflow:visible" width="17" height="16" viewBox="0 0 17 16"><rect x="5" y="0" width="12" height="16" rx="1" fill="#1a6ac0"/><rect x="8" y="2" width="8" height="5" fill="#50a8f0"/><rect x="0" y="3" width="10" height="10" rx="1" fill="#0c58a8"/><circle cx="5" cy="8" r="2.6" fill="none" stroke="#fff" stroke-width="1.4"/></svg>
<svg class="abs" style="left:192px;top:1003px;overflow:visible" width="19" height="11" viewBox="0 0 19 11"><path d="M3 10.5 C0.5 10.5 0.5 6.5 3.5 6.5 C4 3.5 7 2 9.5 3.5 C11.5 0.5 16 1 16.5 5 C19 5.2 19 10.5 16 10.5Z" fill="#1f7fd0"/><path d="M3 10.5 C0.5 10.5 0.5 7.5 3.5 7.5 H16 C18.5 7.5 19 10.5 16 10.5Z" fill="#2a98e8"/></svg>
<svg class="abs" style="left:232px;top:999px;overflow:visible" width="15" height="18" viewBox="0 0 15 18"><rect x="0.8" y="0.8" width="8" height="16.4" fill="#202b33" stroke="#bfe4f8" stroke-width="1.4"/><rect x="2.5" y="3" width="1.6" height="1.6" fill="#bfe4f8"/><rect x="5.5" y="3" width="1.6" height="1.6" fill="#bfe4f8"/><rect x="2.5" y="6" width="1.6" height="1.6" fill="#bfe4f8"/><rect x="5.5" y="6" width="1.6" height="1.6" fill="#bfe4f8"/><rect x="2.5" y="9" width="1.6" height="1.6" fill="#bfe4f8"/><rect x="5.5" y="9" width="1.6" height="1.6" fill="#bfe4f8"/><rect x="2.5" y="12" width="1.6" height="1.6" fill="#bfe4f8"/><rect x="5.5" y="12" width="1.6" height="1.6" fill="#bfe4f8"/><rect x="6.8" y="6" width="7" height="11.2" fill="#202b33" stroke="#bfe4f8" stroke-width="1.4"/><rect x="8.6" y="8.5" width="1.5" height="1.5" fill="#bfe4f8"/><rect x="11.2" y="8.5" width="1.5" height="1.5" fill="#bfe4f8"/><rect x="8.6" y="11.2" width="1.5" height="1.5" fill="#bfe4f8"/><rect x="11.2" y="11.2" width="1.5" height="1.5" fill="#bfe4f8"/><rect x="8.6" y="14" width="1.5" height="1.5" fill="#bfe4f8"/><rect x="11.2" y="14" width="1.5" height="1.5" fill="#bfe4f8"/></svg>
<svg class="abs" style="left:267px;top:999px;overflow:visible" width="17" height="18" viewBox="0 0 17 18"><ellipse cx="9.5" cy="3" rx="2.6" ry="2.4" fill="#46b446"/><ellipse cx="5" cy="7" rx="3" ry="1.8" transform="rotate(25 5 7)" fill="#3aa83a"/><ellipse cx="13" cy="8" rx="2.8" ry="1.8" transform="rotate(-20 13 8)" fill="#3aa83a"/><ellipse cx="9" cy="10" rx="2.5" ry="3" fill="#2f9a2f"/><ellipse cx="5" cy="14.5" rx="3.2" ry="2.2" transform="rotate(-35 5 14.5)" fill="#3aa83a"/><ellipse cx="12.5" cy="15" rx="2.4" ry="2.4" fill="#3aa83a"/></svg>
<svg class="abs" style="left:303px;top:999px;overflow:visible" width="17" height="17" viewBox="0 0 17 17"><rect x="0" y="0" width="17" height="17" rx="5" fill="#4a8cf0"/><rect x="3.5" y="5.5" width="7" height="6" rx="1.2" fill="#fff"/><path d="M11 7.5 L14 5.5 V11.5 L11 9.5Z" fill="#fff"/></svg>
<svg class="abs" style="left:341px;top:1000px;overflow:visible" width="16" height="16" viewBox="0 0 16 16"><rect x="0" y="0" width="16" height="16" fill="#1c90d8"/><path d="M4 6 H12 V13 H4Z M6 6 V4 H10 V6 M4 9 H12 M8 6 V13" fill="none" stroke="#cfeaff" stroke-width="1"/></svg>
<svg class="abs" style="left:379px;top:999px;overflow:visible" width="15" height="18" viewBox="0 0 15 18"><path d="M1 3 L9 0 L14 2 V16 L9 18 L1 15Z" fill="#d83b01"/><path d="M5 4 L9 3 V15 L5 14Z" fill="#8a2000"/></svg>
<svg class="abs" style="left:415px;top:999px;overflow:visible" width="17" height="17" viewBox="0 0 17 17"><circle cx="8.5" cy="8.5" r="8.2" fill="#db4437"/><path d="M8.5 8.5 L1.2 12.7 A8.2 8.2 0 0 0 12.6 15.6Z" fill="#0f9d58"/><path d="M8.5 8.5 L15.9 5 A8.2 8.2 0 0 1 12.6 15.6Z" fill="#f4c20d"/><circle cx="8.5" cy="8.5" r="3.8" fill="#fff"/><circle cx="8.5" cy="8.5" r="3" fill="#4285f4"/></svg>
<svg class="abs" style="left:452px;top:999px;overflow:visible" width="17" height="17" viewBox="0 0 17 17"><circle cx="8.5" cy="8.5" r="8.5" fill="#1ed760"/><path d="M3.5 6 C7 4.8 11 5 14 6.6 M4 9 C7 8 10.5 8.3 13 9.6 M4.5 11.8 C7 11 10 11.3 12 12.3" fill="none" stroke="#111" stroke-width="1.4" stroke-linecap="round"/></svg>
<div class="abs" style="left:479px;top:992px;width:36px;height:29px;background:#3f4850"></div>
<svg class="abs" style="left:487px;top:999px;overflow:visible" width="18" height="18" viewBox="0 0 18 18"><path d="M2 15 L9 8 C8.2 5.5 9.5 2.5 12.5 2 L10.5 4.5 L11.5 6.5 L13.5 7.5 L16 5.5 C15.8 8.5 13 10 10.5 9.5 L3.5 16.5 C3 17 2 17 1.5 16.5 C1 16 1.5 15.5 2 15Z" fill="#f4f4f4"/></svg>
<svg class="abs" style="left:525px;top:999px;overflow:visible" width="17" height="18" viewBox="0 0 17 18"><path d="M7 0 H16 L10 7 H15 L3 18 L7 10 H2Z" fill="#f4c83a"/></svg>
<svg class="abs" style="left:563px;top:999px;overflow:visible" width="17" height="17" viewBox="0 0 17 17"><circle cx="8.5" cy="8.5" r="8.2" fill="#db4437"/><path d="M8.5 8.5 L1.2 12.7 A8.2 8.2 0 0 0 12.6 15.6Z" fill="#0f9d58"/><path d="M8.5 8.5 L15.9 5 A8.2 8.2 0 0 1 12.6 15.6Z" fill="#f4c20d"/><circle cx="8.5" cy="8.5" r="3.8" fill="#fff"/><circle cx="8.5" cy="8.5" r="3" fill="#4285f4"/></svg>
<svg class="abs" style="left:571px;top:1008px;overflow:visible" width="10" height="10" viewBox="0 0 10 10"><circle cx="5" cy="5" r="4.5" fill="#222"/><path d="M5 2 V8" stroke="#ccc" stroke-width="1.4"/></svg>
<div class="t" style="left:1227px;top:1000px;font-size:12px;line-height:15px;color:#fff">9:54 AM</div>
<div class="abs" style="left:0;top:991px;width:1278px;height:1px;background:#e6e6e6"></div>
<div class="abs" style="left:0;top:108px;width:1px;height:884px;background:#6a6a6a"></div>
<div class="abs" style="left:1277px;top:109px;width:1px;height:883px;background:#e4e4e4"></div>
</body></html>
